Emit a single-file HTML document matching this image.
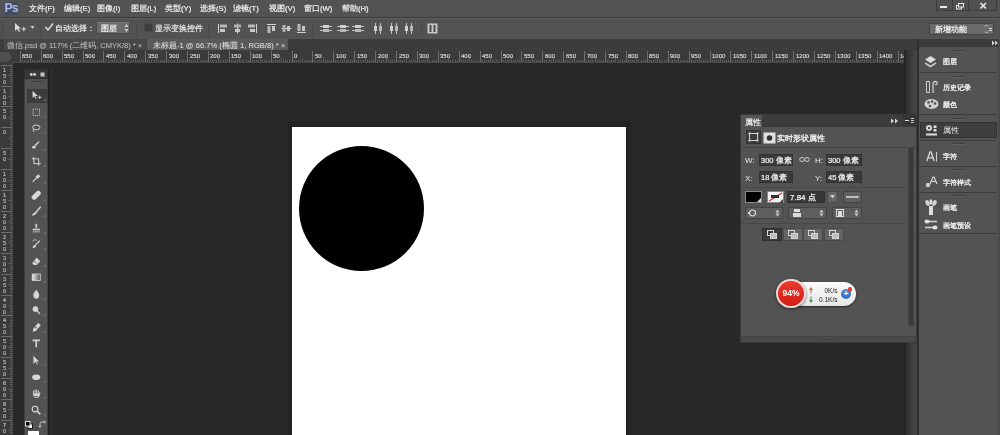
<!DOCTYPE html><html><head><meta charset="utf-8"><style>
*{margin:0;padding:0;box-sizing:border-box}
html,body{width:1000px;height:435px;overflow:hidden;background:#282828;font-family:"Liberation Sans",sans-serif;color:#ddd}
div,span,svg{position:absolute}
.t{will-change:transform;white-space:nowrap;color:#e0e0e0;font-size:9px;line-height:11px}
.ic{stroke:#d8d8d8;fill:none;stroke-width:1}
.rl{will-change:transform;font-size:6px;line-height:6px;color:#dcdcdc;white-space:nowrap;-webkit-text-stroke:0.15px #dcdcdc}
</style></head><body>
<div style="left:0px;top:0px;width:1000px;height:17px;background:#535353;"></div>
<div style="left:4px;top:2px;width:13px;height:13px;background:#424a5e;"></div>
<div style="left:4.5px;top:1.5px;font-size:12px;line-height:13px;font-weight:bold;color:#a8bce6;letter-spacing:-0.8px">Ps</div>
<div class="t" style="left:29px;top:3px;font-size:7.7px;color:#f0f0f0;-webkit-text-stroke:0.2px #f0f0f0">文件(F)</div>
<div class="t" style="left:64px;top:3px;font-size:7.7px;color:#f0f0f0;-webkit-text-stroke:0.2px #f0f0f0">编辑(E)</div>
<div class="t" style="left:97px;top:3px;font-size:7.7px;color:#f0f0f0;-webkit-text-stroke:0.2px #f0f0f0">图像(I)</div>
<div class="t" style="left:131px;top:3px;font-size:7.7px;color:#f0f0f0;-webkit-text-stroke:0.2px #f0f0f0">图层(L)</div>
<div class="t" style="left:165px;top:3px;font-size:7.7px;color:#f0f0f0;-webkit-text-stroke:0.2px #f0f0f0">类型(Y)</div>
<div class="t" style="left:200px;top:3px;font-size:7.7px;color:#f0f0f0;-webkit-text-stroke:0.2px #f0f0f0">选择(S)</div>
<div class="t" style="left:233px;top:3px;font-size:7.7px;color:#f0f0f0;-webkit-text-stroke:0.2px #f0f0f0">滤镜(T)</div>
<div class="t" style="left:269px;top:3px;font-size:7.7px;color:#f0f0f0;-webkit-text-stroke:0.2px #f0f0f0">视图(V)</div>
<div class="t" style="left:304px;top:3px;font-size:7.7px;color:#f0f0f0;-webkit-text-stroke:0.2px #f0f0f0">窗口(W)</div>
<div class="t" style="left:342px;top:3px;font-size:7.7px;color:#f0f0f0;-webkit-text-stroke:0.2px #f0f0f0">帮助(H)</div>
<div style="left:936px;top:0px;width:61px;height:11px;background:#505050;border:1px solid #3c3c3c;border-top:none"></div>
<div style="left:952px;top:0px;width:1px;height:11px;background:#3c3c3c;"></div>
<div style="left:968px;top:0px;width:1px;height:11px;background:#3c3c3c;"></div>
<div style="left:940px;top:6px;width:7px;height:2px;background:#e8e8e8;"></div>
<svg style="left:955px;top:2px;" width="10" height="8" viewBox="0 0 10 8"><rect x="1.5" y="3.5" width="5" height="3.5" stroke="#e8e8e8" fill="none"/><rect x="3.5" y="1.5" width="5" height="3.5" stroke="#e8e8e8" fill="#505050"/></svg>
<svg style="left:979px;top:2px;" width="9" height="8" viewBox="0 0 9 8"><path d="M1.5 1L7 6.5M7 1L1.5 6.5" stroke="#f0f0f0" stroke-width="1.5"/></svg>
<div style="left:0px;top:17px;width:1000px;height:1px;background:#3c3c3c;"></div>
<div style="left:0px;top:18px;width:1000px;height:21px;background:#535353;"></div>
<div style="left:0px;top:18px;width:1000px;height:1px;background:#5c5c5c;"></div>
<div style="left:0px;top:21px;width:1000px;height:1px;background:#4f4f4f;"></div>
<div style="left:1px;top:21px;width:1px;height:15px;background:#474747;"></div>
<div style="left:3px;top:21px;width:1px;height:15px;background:#474747;"></div>
<svg style="left:13px;top:22px;" width="14" height="11" viewBox="0 0 14 11"><path d="M2 1L2 9L4 7L6 10L7 9.5L5.5 6.5L8 6.5Z" fill="#dcdcdc"/><path d="M8.5 7H13M10.8 4.8V9.2" stroke="#dcdcdc"/></svg>
<svg style="left:30px;top:25px;" width="5" height="5" viewBox="0 0 5 5"><path d="M0.5 1L4.5 1L2.5 4Z" fill="#cfcfcf"/></svg>
<div style="left:40px;top:20px;width:1px;height:17px;background:#4a4a4a;"></div>
<svg style="left:44px;top:22px;" width="10" height="10" viewBox="0 0 10 10"><path d="M1.5 5L4 8L9 1.5" stroke="#e0e0e0" stroke-width="1.4" fill="none"/></svg>
<div class="t" style="left:55px;top:23px;font-size:8px;color:#f0f0f0;-webkit-text-stroke:0.15px #f0f0f0">自动选择：</div>
<div style="left:96px;top:22px;width:34px;height:12px;background:#6b6b6b;border:1px solid #4a4a4a;border-top-color:#777"></div>
<div class="t" style="left:101px;top:23px;font-size:8px;color:#f6f6f6;-webkit-text-stroke:0.2px #f6f6f6">图层</div>
<svg style="left:124px;top:23px;" width="5" height="10" viewBox="0 0 5 10"><path d="M0.5 4L2.5 1L4.5 4Z M0.5 6L2.5 9L4.5 6Z" fill="#d0d0d0"/></svg>
<div style="left:136px;top:20px;width:1px;height:17px;background:#4a4a4a;"></div>
<div style="left:144px;top:23px;width:9px;height:9px;background:#3e3e3e;border:1px solid #4a4a4a"></div>
<div class="t" style="left:155px;top:23px;font-size:7.5px;color:#f0f0f0;-webkit-text-stroke:0.15px #f0f0f0">显示变换控件</div>
<div style="left:208px;top:20px;width:1px;height:17px;background:#4a4a4a;"></div>
<svg style="left:217px;top:23px;" width="11" height="11" viewBox="0 0 11 11"><path d="M1.5 1V10" stroke="#d0d0d0"/><rect x="3" y="1.5" width="7" height="3" fill="#b8b8b8"/><rect x="3" y="6" width="5" height="3" fill="#c8c8c8"/></svg>
<svg style="left:232px;top:23px;" width="11" height="11" viewBox="0 0 11 11"><path d="M5.5 0.5V10.5" stroke="#d0d0d0"/><rect x="2" y="1.5" width="7" height="3" fill="#b0b0b0"/><rect x="3" y="6" width="5" height="3" fill="#c8c8c8"/></svg>
<svg style="left:247px;top:23px;" width="11" height="11" viewBox="0 0 11 11"><path d="M9.5 1V10" stroke="#d0d0d0"/><rect x="1" y="1.5" width="7" height="3" fill="#b8b8b8"/><rect x="3" y="6" width="5" height="3" fill="#c8c8c8"/></svg>
<svg style="left:266px;top:23px;" width="11" height="11" viewBox="0 0 11 11"><path d="M1 1.5H10" stroke="#d0d0d0"/><rect x="1.5" y="3" width="3" height="7" fill="#b8b8b8"/><rect x="6" y="3" width="3" height="5" fill="#c8c8c8"/></svg>
<svg style="left:281px;top:23px;" width="11" height="11" viewBox="0 0 11 11"><path d="M0.5 5.5H10.5" stroke="#d0d0d0"/><rect x="1.5" y="2" width="3" height="7" fill="#b0b0b0"/><rect x="6" y="3" width="3" height="5" fill="#c8c8c8"/></svg>
<svg style="left:296px;top:23px;" width="11" height="11" viewBox="0 0 11 11"><path d="M1 9.5H10" stroke="#d0d0d0"/><rect x="1.5" y="1" width="3" height="7" fill="#b8b8b8"/><rect x="6" y="3" width="3" height="5" fill="#c8c8c8"/></svg>
<div style="left:312px;top:20px;width:1px;height:17px;background:#4a4a4a;"></div>
<svg style="left:320px;top:23px;" width="12" height="11" viewBox="0 0 12 11"><path d="M0 3.5H12M0 7.5H12" stroke="#c0c0c0"/><rect x="3" y="2" width="6" height="3" fill="#d0d0d0"/><rect x="3" y="6" width="6" height="3" fill="#b8b8b8"/></svg>
<svg style="left:337px;top:23px;" width="12" height="11" viewBox="0 0 12 11"><path d="M0 3.5H12M0 7.5H12" stroke="#c0c0c0"/><rect x="3" y="2" width="6" height="3" fill="#d0d0d0"/><rect x="3" y="6" width="6" height="3" fill="#b8b8b8"/></svg>
<svg style="left:352px;top:23px;" width="12" height="11" viewBox="0 0 12 11"><path d="M0 3.5H12M0 7.5H12" stroke="#c0c0c0"/><rect x="3" y="2" width="6" height="3" fill="#d0d0d0"/><rect x="3" y="6" width="6" height="3" fill="#b8b8b8"/></svg>
<svg style="left:372px;top:23px;" width="12" height="11" viewBox="0 0 12 11"><path d="M3.5 0V11M8.5 0V11" stroke="#c0c0c0"/><rect x="2" y="3" width="3" height="5" fill="#d0d0d0"/><rect x="7" y="3" width="3" height="5" fill="#b8b8b8"/></svg>
<svg style="left:388px;top:23px;" width="12" height="11" viewBox="0 0 12 11"><path d="M3.5 0V11M8.5 0V11" stroke="#c0c0c0"/><rect x="2" y="3" width="3" height="5" fill="#d0d0d0"/><rect x="7" y="3" width="3" height="5" fill="#b8b8b8"/></svg>
<svg style="left:403px;top:23px;" width="12" height="11" viewBox="0 0 12 11"><path d="M3.5 0V11M8.5 0V11" stroke="#c0c0c0"/><rect x="2" y="3" width="3" height="5" fill="#d0d0d0"/><rect x="7" y="3" width="3" height="5" fill="#b8b8b8"/></svg>
<div style="left:421px;top:20px;width:1px;height:17px;background:#4a4a4a;"></div>
<svg style="left:427px;top:23px;" width="11" height="11" viewBox="0 0 11 11"><rect x="0.5" y="0.5" width="10" height="10" fill="#c8c8c8"/><rect x="2.5" y="2" width="2" height="7" fill="#4a4a4a"/><rect x="6.5" y="2" width="2" height="7" fill="#4a4a4a"/></svg>
<div style="left:929px;top:23px;width:65px;height:12px;background:#6a6a6a;border:1px solid #454545"></div>
<div class="t" style="left:935px;top:24px;font-size:8px;color:#f4f4f4;-webkit-text-stroke:0.2px #f4f4f4">新增功能</div>
<svg style="left:984px;top:24px;" width="9" height="10" viewBox="0 0 9 10"><path d="M1 2.5L2.5 1L4 2.5M1 7.5L2.5 9L4 7.5" stroke="#ccc" fill="none"/><path d="M5 4.5H8M5 6.5H8" stroke="#ddd"/></svg>
<div style="left:0px;top:39px;width:917px;height:11px;background:#3c3c3c;"></div>
<div style="left:4px;top:39px;width:143px;height:11px;background:#474747;"></div>
<div class="t" style="left:7px;top:40px;font-size:7.5px;color:#c4c4c4">微信.psd @ 117% (二维码, CMYK/8) * ×</div>
<div style="left:147px;top:39px;width:141px;height:11px;background:#5a5a5a;"></div>
<div class="t" style="left:153px;top:40px;font-size:7.6px;color:#e8e8e8">未标题-1 @ 66.7% (椭圆 1, RGB/8) * ×</div>
<div style="left:0px;top:50px;width:906px;height:13px;background:#3b3b3b;"></div>
<div style="left:0px;top:63px;width:13px;height:372px;background:#3b3b3b;"></div>
<div style="left:13px;top:62px;width:893px;height:1px;background:#4a4a4a;"></div>
<div style="left:12px;top:63px;width:1px;height:372px;background:#4a4a4a;"></div>
<div style="left:19.80px;top:51px;width:1px;height:11px;background:#6e6e6e"></div>
<div class="rl" style="left:22.30px;top:53px">650</div>
<div style="left:21.89px;top:60px;width:1px;height:2px;background:#5a5a5a"></div>
<div style="left:23.98px;top:60px;width:1px;height:2px;background:#5a5a5a"></div>
<div style="left:26.07px;top:60px;width:1px;height:2px;background:#5a5a5a"></div>
<div style="left:28.16px;top:60px;width:1px;height:2px;background:#5a5a5a"></div>
<div style="left:30.25px;top:58px;width:1px;height:4px;background:#5a5a5a"></div>
<div style="left:32.34px;top:60px;width:1px;height:2px;background:#5a5a5a"></div>
<div style="left:34.43px;top:60px;width:1px;height:2px;background:#5a5a5a"></div>
<div style="left:36.52px;top:60px;width:1px;height:2px;background:#5a5a5a"></div>
<div style="left:38.61px;top:60px;width:1px;height:2px;background:#5a5a5a"></div>
<div style="left:40.70px;top:51px;width:1px;height:11px;background:#6e6e6e"></div>
<div class="rl" style="left:43.20px;top:53px">600</div>
<div style="left:42.79px;top:60px;width:1px;height:2px;background:#5a5a5a"></div>
<div style="left:44.88px;top:60px;width:1px;height:2px;background:#5a5a5a"></div>
<div style="left:46.97px;top:60px;width:1px;height:2px;background:#5a5a5a"></div>
<div style="left:49.06px;top:60px;width:1px;height:2px;background:#5a5a5a"></div>
<div style="left:51.15px;top:58px;width:1px;height:4px;background:#5a5a5a"></div>
<div style="left:53.24px;top:60px;width:1px;height:2px;background:#5a5a5a"></div>
<div style="left:55.33px;top:60px;width:1px;height:2px;background:#5a5a5a"></div>
<div style="left:57.42px;top:60px;width:1px;height:2px;background:#5a5a5a"></div>
<div style="left:59.51px;top:60px;width:1px;height:2px;background:#5a5a5a"></div>
<div style="left:61.60px;top:51px;width:1px;height:11px;background:#6e6e6e"></div>
<div class="rl" style="left:64.10px;top:53px">550</div>
<div style="left:63.69px;top:60px;width:1px;height:2px;background:#5a5a5a"></div>
<div style="left:65.78px;top:60px;width:1px;height:2px;background:#5a5a5a"></div>
<div style="left:67.87px;top:60px;width:1px;height:2px;background:#5a5a5a"></div>
<div style="left:69.96px;top:60px;width:1px;height:2px;background:#5a5a5a"></div>
<div style="left:72.05px;top:58px;width:1px;height:4px;background:#5a5a5a"></div>
<div style="left:74.14px;top:60px;width:1px;height:2px;background:#5a5a5a"></div>
<div style="left:76.23px;top:60px;width:1px;height:2px;background:#5a5a5a"></div>
<div style="left:78.32px;top:60px;width:1px;height:2px;background:#5a5a5a"></div>
<div style="left:80.41px;top:60px;width:1px;height:2px;background:#5a5a5a"></div>
<div style="left:82.50px;top:51px;width:1px;height:11px;background:#6e6e6e"></div>
<div class="rl" style="left:85.00px;top:53px">500</div>
<div style="left:84.59px;top:60px;width:1px;height:2px;background:#5a5a5a"></div>
<div style="left:86.68px;top:60px;width:1px;height:2px;background:#5a5a5a"></div>
<div style="left:88.77px;top:60px;width:1px;height:2px;background:#5a5a5a"></div>
<div style="left:90.86px;top:60px;width:1px;height:2px;background:#5a5a5a"></div>
<div style="left:92.95px;top:58px;width:1px;height:4px;background:#5a5a5a"></div>
<div style="left:95.04px;top:60px;width:1px;height:2px;background:#5a5a5a"></div>
<div style="left:97.13px;top:60px;width:1px;height:2px;background:#5a5a5a"></div>
<div style="left:99.22px;top:60px;width:1px;height:2px;background:#5a5a5a"></div>
<div style="left:101.31px;top:60px;width:1px;height:2px;background:#5a5a5a"></div>
<div style="left:103.40px;top:51px;width:1px;height:11px;background:#6e6e6e"></div>
<div class="rl" style="left:105.90px;top:53px">450</div>
<div style="left:105.49px;top:60px;width:1px;height:2px;background:#5a5a5a"></div>
<div style="left:107.58px;top:60px;width:1px;height:2px;background:#5a5a5a"></div>
<div style="left:109.67px;top:60px;width:1px;height:2px;background:#5a5a5a"></div>
<div style="left:111.76px;top:60px;width:1px;height:2px;background:#5a5a5a"></div>
<div style="left:113.85px;top:58px;width:1px;height:4px;background:#5a5a5a"></div>
<div style="left:115.94px;top:60px;width:1px;height:2px;background:#5a5a5a"></div>
<div style="left:118.03px;top:60px;width:1px;height:2px;background:#5a5a5a"></div>
<div style="left:120.12px;top:60px;width:1px;height:2px;background:#5a5a5a"></div>
<div style="left:122.21px;top:60px;width:1px;height:2px;background:#5a5a5a"></div>
<div style="left:124.30px;top:51px;width:1px;height:11px;background:#6e6e6e"></div>
<div class="rl" style="left:126.80px;top:53px">400</div>
<div style="left:126.39px;top:60px;width:1px;height:2px;background:#5a5a5a"></div>
<div style="left:128.48px;top:60px;width:1px;height:2px;background:#5a5a5a"></div>
<div style="left:130.57px;top:60px;width:1px;height:2px;background:#5a5a5a"></div>
<div style="left:132.66px;top:60px;width:1px;height:2px;background:#5a5a5a"></div>
<div style="left:134.75px;top:58px;width:1px;height:4px;background:#5a5a5a"></div>
<div style="left:136.84px;top:60px;width:1px;height:2px;background:#5a5a5a"></div>
<div style="left:138.93px;top:60px;width:1px;height:2px;background:#5a5a5a"></div>
<div style="left:141.02px;top:60px;width:1px;height:2px;background:#5a5a5a"></div>
<div style="left:143.11px;top:60px;width:1px;height:2px;background:#5a5a5a"></div>
<div style="left:145.20px;top:51px;width:1px;height:11px;background:#6e6e6e"></div>
<div class="rl" style="left:147.70px;top:53px">350</div>
<div style="left:147.29px;top:60px;width:1px;height:2px;background:#5a5a5a"></div>
<div style="left:149.38px;top:60px;width:1px;height:2px;background:#5a5a5a"></div>
<div style="left:151.47px;top:60px;width:1px;height:2px;background:#5a5a5a"></div>
<div style="left:153.56px;top:60px;width:1px;height:2px;background:#5a5a5a"></div>
<div style="left:155.65px;top:58px;width:1px;height:4px;background:#5a5a5a"></div>
<div style="left:157.74px;top:60px;width:1px;height:2px;background:#5a5a5a"></div>
<div style="left:159.83px;top:60px;width:1px;height:2px;background:#5a5a5a"></div>
<div style="left:161.92px;top:60px;width:1px;height:2px;background:#5a5a5a"></div>
<div style="left:164.01px;top:60px;width:1px;height:2px;background:#5a5a5a"></div>
<div style="left:166.10px;top:51px;width:1px;height:11px;background:#6e6e6e"></div>
<div class="rl" style="left:168.60px;top:53px">300</div>
<div style="left:168.19px;top:60px;width:1px;height:2px;background:#5a5a5a"></div>
<div style="left:170.28px;top:60px;width:1px;height:2px;background:#5a5a5a"></div>
<div style="left:172.37px;top:60px;width:1px;height:2px;background:#5a5a5a"></div>
<div style="left:174.46px;top:60px;width:1px;height:2px;background:#5a5a5a"></div>
<div style="left:176.55px;top:58px;width:1px;height:4px;background:#5a5a5a"></div>
<div style="left:178.64px;top:60px;width:1px;height:2px;background:#5a5a5a"></div>
<div style="left:180.73px;top:60px;width:1px;height:2px;background:#5a5a5a"></div>
<div style="left:182.82px;top:60px;width:1px;height:2px;background:#5a5a5a"></div>
<div style="left:184.91px;top:60px;width:1px;height:2px;background:#5a5a5a"></div>
<div style="left:187.00px;top:51px;width:1px;height:11px;background:#6e6e6e"></div>
<div class="rl" style="left:189.50px;top:53px">250</div>
<div style="left:189.09px;top:60px;width:1px;height:2px;background:#5a5a5a"></div>
<div style="left:191.18px;top:60px;width:1px;height:2px;background:#5a5a5a"></div>
<div style="left:193.27px;top:60px;width:1px;height:2px;background:#5a5a5a"></div>
<div style="left:195.36px;top:60px;width:1px;height:2px;background:#5a5a5a"></div>
<div style="left:197.45px;top:58px;width:1px;height:4px;background:#5a5a5a"></div>
<div style="left:199.54px;top:60px;width:1px;height:2px;background:#5a5a5a"></div>
<div style="left:201.63px;top:60px;width:1px;height:2px;background:#5a5a5a"></div>
<div style="left:203.72px;top:60px;width:1px;height:2px;background:#5a5a5a"></div>
<div style="left:205.81px;top:60px;width:1px;height:2px;background:#5a5a5a"></div>
<div style="left:207.90px;top:51px;width:1px;height:11px;background:#6e6e6e"></div>
<div class="rl" style="left:210.40px;top:53px">200</div>
<div style="left:209.99px;top:60px;width:1px;height:2px;background:#5a5a5a"></div>
<div style="left:212.08px;top:60px;width:1px;height:2px;background:#5a5a5a"></div>
<div style="left:214.17px;top:60px;width:1px;height:2px;background:#5a5a5a"></div>
<div style="left:216.26px;top:60px;width:1px;height:2px;background:#5a5a5a"></div>
<div style="left:218.35px;top:58px;width:1px;height:4px;background:#5a5a5a"></div>
<div style="left:220.44px;top:60px;width:1px;height:2px;background:#5a5a5a"></div>
<div style="left:222.53px;top:60px;width:1px;height:2px;background:#5a5a5a"></div>
<div style="left:224.62px;top:60px;width:1px;height:2px;background:#5a5a5a"></div>
<div style="left:226.71px;top:60px;width:1px;height:2px;background:#5a5a5a"></div>
<div style="left:228.80px;top:51px;width:1px;height:11px;background:#6e6e6e"></div>
<div class="rl" style="left:231.30px;top:53px">150</div>
<div style="left:230.89px;top:60px;width:1px;height:2px;background:#5a5a5a"></div>
<div style="left:232.98px;top:60px;width:1px;height:2px;background:#5a5a5a"></div>
<div style="left:235.07px;top:60px;width:1px;height:2px;background:#5a5a5a"></div>
<div style="left:237.16px;top:60px;width:1px;height:2px;background:#5a5a5a"></div>
<div style="left:239.25px;top:58px;width:1px;height:4px;background:#5a5a5a"></div>
<div style="left:241.34px;top:60px;width:1px;height:2px;background:#5a5a5a"></div>
<div style="left:243.43px;top:60px;width:1px;height:2px;background:#5a5a5a"></div>
<div style="left:245.52px;top:60px;width:1px;height:2px;background:#5a5a5a"></div>
<div style="left:247.61px;top:60px;width:1px;height:2px;background:#5a5a5a"></div>
<div style="left:249.70px;top:51px;width:1px;height:11px;background:#6e6e6e"></div>
<div class="rl" style="left:252.20px;top:53px">100</div>
<div style="left:251.79px;top:60px;width:1px;height:2px;background:#5a5a5a"></div>
<div style="left:253.88px;top:60px;width:1px;height:2px;background:#5a5a5a"></div>
<div style="left:255.97px;top:60px;width:1px;height:2px;background:#5a5a5a"></div>
<div style="left:258.06px;top:60px;width:1px;height:2px;background:#5a5a5a"></div>
<div style="left:260.15px;top:58px;width:1px;height:4px;background:#5a5a5a"></div>
<div style="left:262.24px;top:60px;width:1px;height:2px;background:#5a5a5a"></div>
<div style="left:264.33px;top:60px;width:1px;height:2px;background:#5a5a5a"></div>
<div style="left:266.42px;top:60px;width:1px;height:2px;background:#5a5a5a"></div>
<div style="left:268.51px;top:60px;width:1px;height:2px;background:#5a5a5a"></div>
<div style="left:270.60px;top:51px;width:1px;height:11px;background:#6e6e6e"></div>
<div class="rl" style="left:273.10px;top:53px">50</div>
<div style="left:272.69px;top:60px;width:1px;height:2px;background:#5a5a5a"></div>
<div style="left:274.78px;top:60px;width:1px;height:2px;background:#5a5a5a"></div>
<div style="left:276.87px;top:60px;width:1px;height:2px;background:#5a5a5a"></div>
<div style="left:278.96px;top:60px;width:1px;height:2px;background:#5a5a5a"></div>
<div style="left:281.05px;top:58px;width:1px;height:4px;background:#5a5a5a"></div>
<div style="left:283.14px;top:60px;width:1px;height:2px;background:#5a5a5a"></div>
<div style="left:285.23px;top:60px;width:1px;height:2px;background:#5a5a5a"></div>
<div style="left:287.32px;top:60px;width:1px;height:2px;background:#5a5a5a"></div>
<div style="left:289.41px;top:60px;width:1px;height:2px;background:#5a5a5a"></div>
<div style="left:291.50px;top:51px;width:1px;height:11px;background:#6e6e6e"></div>
<div class="rl" style="left:294.00px;top:53px">0</div>
<div style="left:293.59px;top:60px;width:1px;height:2px;background:#5a5a5a"></div>
<div style="left:295.68px;top:60px;width:1px;height:2px;background:#5a5a5a"></div>
<div style="left:297.77px;top:60px;width:1px;height:2px;background:#5a5a5a"></div>
<div style="left:299.86px;top:60px;width:1px;height:2px;background:#5a5a5a"></div>
<div style="left:301.95px;top:58px;width:1px;height:4px;background:#5a5a5a"></div>
<div style="left:304.04px;top:60px;width:1px;height:2px;background:#5a5a5a"></div>
<div style="left:306.13px;top:60px;width:1px;height:2px;background:#5a5a5a"></div>
<div style="left:308.22px;top:60px;width:1px;height:2px;background:#5a5a5a"></div>
<div style="left:310.31px;top:60px;width:1px;height:2px;background:#5a5a5a"></div>
<div style="left:312.40px;top:51px;width:1px;height:11px;background:#6e6e6e"></div>
<div class="rl" style="left:314.90px;top:53px">50</div>
<div style="left:314.49px;top:60px;width:1px;height:2px;background:#5a5a5a"></div>
<div style="left:316.58px;top:60px;width:1px;height:2px;background:#5a5a5a"></div>
<div style="left:318.67px;top:60px;width:1px;height:2px;background:#5a5a5a"></div>
<div style="left:320.76px;top:60px;width:1px;height:2px;background:#5a5a5a"></div>
<div style="left:322.85px;top:58px;width:1px;height:4px;background:#5a5a5a"></div>
<div style="left:324.94px;top:60px;width:1px;height:2px;background:#5a5a5a"></div>
<div style="left:327.03px;top:60px;width:1px;height:2px;background:#5a5a5a"></div>
<div style="left:329.12px;top:60px;width:1px;height:2px;background:#5a5a5a"></div>
<div style="left:331.21px;top:60px;width:1px;height:2px;background:#5a5a5a"></div>
<div style="left:333.30px;top:51px;width:1px;height:11px;background:#6e6e6e"></div>
<div class="rl" style="left:335.80px;top:53px">100</div>
<div style="left:335.39px;top:60px;width:1px;height:2px;background:#5a5a5a"></div>
<div style="left:337.48px;top:60px;width:1px;height:2px;background:#5a5a5a"></div>
<div style="left:339.57px;top:60px;width:1px;height:2px;background:#5a5a5a"></div>
<div style="left:341.66px;top:60px;width:1px;height:2px;background:#5a5a5a"></div>
<div style="left:343.75px;top:58px;width:1px;height:4px;background:#5a5a5a"></div>
<div style="left:345.84px;top:60px;width:1px;height:2px;background:#5a5a5a"></div>
<div style="left:347.93px;top:60px;width:1px;height:2px;background:#5a5a5a"></div>
<div style="left:350.02px;top:60px;width:1px;height:2px;background:#5a5a5a"></div>
<div style="left:352.11px;top:60px;width:1px;height:2px;background:#5a5a5a"></div>
<div style="left:354.20px;top:51px;width:1px;height:11px;background:#6e6e6e"></div>
<div class="rl" style="left:356.70px;top:53px">150</div>
<div style="left:356.29px;top:60px;width:1px;height:2px;background:#5a5a5a"></div>
<div style="left:358.38px;top:60px;width:1px;height:2px;background:#5a5a5a"></div>
<div style="left:360.47px;top:60px;width:1px;height:2px;background:#5a5a5a"></div>
<div style="left:362.56px;top:60px;width:1px;height:2px;background:#5a5a5a"></div>
<div style="left:364.65px;top:58px;width:1px;height:4px;background:#5a5a5a"></div>
<div style="left:366.74px;top:60px;width:1px;height:2px;background:#5a5a5a"></div>
<div style="left:368.83px;top:60px;width:1px;height:2px;background:#5a5a5a"></div>
<div style="left:370.92px;top:60px;width:1px;height:2px;background:#5a5a5a"></div>
<div style="left:373.01px;top:60px;width:1px;height:2px;background:#5a5a5a"></div>
<div style="left:375.10px;top:51px;width:1px;height:11px;background:#6e6e6e"></div>
<div class="rl" style="left:377.60px;top:53px">200</div>
<div style="left:377.19px;top:60px;width:1px;height:2px;background:#5a5a5a"></div>
<div style="left:379.28px;top:60px;width:1px;height:2px;background:#5a5a5a"></div>
<div style="left:381.37px;top:60px;width:1px;height:2px;background:#5a5a5a"></div>
<div style="left:383.46px;top:60px;width:1px;height:2px;background:#5a5a5a"></div>
<div style="left:385.55px;top:58px;width:1px;height:4px;background:#5a5a5a"></div>
<div style="left:387.64px;top:60px;width:1px;height:2px;background:#5a5a5a"></div>
<div style="left:389.73px;top:60px;width:1px;height:2px;background:#5a5a5a"></div>
<div style="left:391.82px;top:60px;width:1px;height:2px;background:#5a5a5a"></div>
<div style="left:393.91px;top:60px;width:1px;height:2px;background:#5a5a5a"></div>
<div style="left:396.00px;top:51px;width:1px;height:11px;background:#6e6e6e"></div>
<div class="rl" style="left:398.50px;top:53px">250</div>
<div style="left:398.09px;top:60px;width:1px;height:2px;background:#5a5a5a"></div>
<div style="left:400.18px;top:60px;width:1px;height:2px;background:#5a5a5a"></div>
<div style="left:402.27px;top:60px;width:1px;height:2px;background:#5a5a5a"></div>
<div style="left:404.36px;top:60px;width:1px;height:2px;background:#5a5a5a"></div>
<div style="left:406.45px;top:58px;width:1px;height:4px;background:#5a5a5a"></div>
<div style="left:408.54px;top:60px;width:1px;height:2px;background:#5a5a5a"></div>
<div style="left:410.63px;top:60px;width:1px;height:2px;background:#5a5a5a"></div>
<div style="left:412.72px;top:60px;width:1px;height:2px;background:#5a5a5a"></div>
<div style="left:414.81px;top:60px;width:1px;height:2px;background:#5a5a5a"></div>
<div style="left:416.90px;top:51px;width:1px;height:11px;background:#6e6e6e"></div>
<div class="rl" style="left:419.40px;top:53px">300</div>
<div style="left:418.99px;top:60px;width:1px;height:2px;background:#5a5a5a"></div>
<div style="left:421.08px;top:60px;width:1px;height:2px;background:#5a5a5a"></div>
<div style="left:423.17px;top:60px;width:1px;height:2px;background:#5a5a5a"></div>
<div style="left:425.26px;top:60px;width:1px;height:2px;background:#5a5a5a"></div>
<div style="left:427.35px;top:58px;width:1px;height:4px;background:#5a5a5a"></div>
<div style="left:429.44px;top:60px;width:1px;height:2px;background:#5a5a5a"></div>
<div style="left:431.53px;top:60px;width:1px;height:2px;background:#5a5a5a"></div>
<div style="left:433.62px;top:60px;width:1px;height:2px;background:#5a5a5a"></div>
<div style="left:435.71px;top:60px;width:1px;height:2px;background:#5a5a5a"></div>
<div style="left:437.80px;top:51px;width:1px;height:11px;background:#6e6e6e"></div>
<div class="rl" style="left:440.30px;top:53px">350</div>
<div style="left:439.89px;top:60px;width:1px;height:2px;background:#5a5a5a"></div>
<div style="left:441.98px;top:60px;width:1px;height:2px;background:#5a5a5a"></div>
<div style="left:444.07px;top:60px;width:1px;height:2px;background:#5a5a5a"></div>
<div style="left:446.16px;top:60px;width:1px;height:2px;background:#5a5a5a"></div>
<div style="left:448.25px;top:58px;width:1px;height:4px;background:#5a5a5a"></div>
<div style="left:450.34px;top:60px;width:1px;height:2px;background:#5a5a5a"></div>
<div style="left:452.43px;top:60px;width:1px;height:2px;background:#5a5a5a"></div>
<div style="left:454.52px;top:60px;width:1px;height:2px;background:#5a5a5a"></div>
<div style="left:456.61px;top:60px;width:1px;height:2px;background:#5a5a5a"></div>
<div style="left:458.70px;top:51px;width:1px;height:11px;background:#6e6e6e"></div>
<div class="rl" style="left:461.20px;top:53px">400</div>
<div style="left:460.79px;top:60px;width:1px;height:2px;background:#5a5a5a"></div>
<div style="left:462.88px;top:60px;width:1px;height:2px;background:#5a5a5a"></div>
<div style="left:464.97px;top:60px;width:1px;height:2px;background:#5a5a5a"></div>
<div style="left:467.06px;top:60px;width:1px;height:2px;background:#5a5a5a"></div>
<div style="left:469.15px;top:58px;width:1px;height:4px;background:#5a5a5a"></div>
<div style="left:471.24px;top:60px;width:1px;height:2px;background:#5a5a5a"></div>
<div style="left:473.33px;top:60px;width:1px;height:2px;background:#5a5a5a"></div>
<div style="left:475.42px;top:60px;width:1px;height:2px;background:#5a5a5a"></div>
<div style="left:477.51px;top:60px;width:1px;height:2px;background:#5a5a5a"></div>
<div style="left:479.60px;top:51px;width:1px;height:11px;background:#6e6e6e"></div>
<div class="rl" style="left:482.10px;top:53px">450</div>
<div style="left:481.69px;top:60px;width:1px;height:2px;background:#5a5a5a"></div>
<div style="left:483.78px;top:60px;width:1px;height:2px;background:#5a5a5a"></div>
<div style="left:485.87px;top:60px;width:1px;height:2px;background:#5a5a5a"></div>
<div style="left:487.96px;top:60px;width:1px;height:2px;background:#5a5a5a"></div>
<div style="left:490.05px;top:58px;width:1px;height:4px;background:#5a5a5a"></div>
<div style="left:492.14px;top:60px;width:1px;height:2px;background:#5a5a5a"></div>
<div style="left:494.23px;top:60px;width:1px;height:2px;background:#5a5a5a"></div>
<div style="left:496.32px;top:60px;width:1px;height:2px;background:#5a5a5a"></div>
<div style="left:498.41px;top:60px;width:1px;height:2px;background:#5a5a5a"></div>
<div style="left:500.50px;top:51px;width:1px;height:11px;background:#6e6e6e"></div>
<div class="rl" style="left:503.00px;top:53px">500</div>
<div style="left:502.59px;top:60px;width:1px;height:2px;background:#5a5a5a"></div>
<div style="left:504.68px;top:60px;width:1px;height:2px;background:#5a5a5a"></div>
<div style="left:506.77px;top:60px;width:1px;height:2px;background:#5a5a5a"></div>
<div style="left:508.86px;top:60px;width:1px;height:2px;background:#5a5a5a"></div>
<div style="left:510.95px;top:58px;width:1px;height:4px;background:#5a5a5a"></div>
<div style="left:513.04px;top:60px;width:1px;height:2px;background:#5a5a5a"></div>
<div style="left:515.13px;top:60px;width:1px;height:2px;background:#5a5a5a"></div>
<div style="left:517.22px;top:60px;width:1px;height:2px;background:#5a5a5a"></div>
<div style="left:519.31px;top:60px;width:1px;height:2px;background:#5a5a5a"></div>
<div style="left:521.40px;top:51px;width:1px;height:11px;background:#6e6e6e"></div>
<div class="rl" style="left:523.90px;top:53px">550</div>
<div style="left:523.49px;top:60px;width:1px;height:2px;background:#5a5a5a"></div>
<div style="left:525.58px;top:60px;width:1px;height:2px;background:#5a5a5a"></div>
<div style="left:527.67px;top:60px;width:1px;height:2px;background:#5a5a5a"></div>
<div style="left:529.76px;top:60px;width:1px;height:2px;background:#5a5a5a"></div>
<div style="left:531.85px;top:58px;width:1px;height:4px;background:#5a5a5a"></div>
<div style="left:533.94px;top:60px;width:1px;height:2px;background:#5a5a5a"></div>
<div style="left:536.03px;top:60px;width:1px;height:2px;background:#5a5a5a"></div>
<div style="left:538.12px;top:60px;width:1px;height:2px;background:#5a5a5a"></div>
<div style="left:540.21px;top:60px;width:1px;height:2px;background:#5a5a5a"></div>
<div style="left:542.30px;top:51px;width:1px;height:11px;background:#6e6e6e"></div>
<div class="rl" style="left:544.80px;top:53px">600</div>
<div style="left:544.39px;top:60px;width:1px;height:2px;background:#5a5a5a"></div>
<div style="left:546.48px;top:60px;width:1px;height:2px;background:#5a5a5a"></div>
<div style="left:548.57px;top:60px;width:1px;height:2px;background:#5a5a5a"></div>
<div style="left:550.66px;top:60px;width:1px;height:2px;background:#5a5a5a"></div>
<div style="left:552.75px;top:58px;width:1px;height:4px;background:#5a5a5a"></div>
<div style="left:554.84px;top:60px;width:1px;height:2px;background:#5a5a5a"></div>
<div style="left:556.93px;top:60px;width:1px;height:2px;background:#5a5a5a"></div>
<div style="left:559.02px;top:60px;width:1px;height:2px;background:#5a5a5a"></div>
<div style="left:561.11px;top:60px;width:1px;height:2px;background:#5a5a5a"></div>
<div style="left:563.20px;top:51px;width:1px;height:11px;background:#6e6e6e"></div>
<div class="rl" style="left:565.70px;top:53px">650</div>
<div style="left:565.29px;top:60px;width:1px;height:2px;background:#5a5a5a"></div>
<div style="left:567.38px;top:60px;width:1px;height:2px;background:#5a5a5a"></div>
<div style="left:569.47px;top:60px;width:1px;height:2px;background:#5a5a5a"></div>
<div style="left:571.56px;top:60px;width:1px;height:2px;background:#5a5a5a"></div>
<div style="left:573.65px;top:58px;width:1px;height:4px;background:#5a5a5a"></div>
<div style="left:575.74px;top:60px;width:1px;height:2px;background:#5a5a5a"></div>
<div style="left:577.83px;top:60px;width:1px;height:2px;background:#5a5a5a"></div>
<div style="left:579.92px;top:60px;width:1px;height:2px;background:#5a5a5a"></div>
<div style="left:582.01px;top:60px;width:1px;height:2px;background:#5a5a5a"></div>
<div style="left:584.10px;top:51px;width:1px;height:11px;background:#6e6e6e"></div>
<div class="rl" style="left:586.60px;top:53px">700</div>
<div style="left:586.19px;top:60px;width:1px;height:2px;background:#5a5a5a"></div>
<div style="left:588.28px;top:60px;width:1px;height:2px;background:#5a5a5a"></div>
<div style="left:590.37px;top:60px;width:1px;height:2px;background:#5a5a5a"></div>
<div style="left:592.46px;top:60px;width:1px;height:2px;background:#5a5a5a"></div>
<div style="left:594.55px;top:58px;width:1px;height:4px;background:#5a5a5a"></div>
<div style="left:596.64px;top:60px;width:1px;height:2px;background:#5a5a5a"></div>
<div style="left:598.73px;top:60px;width:1px;height:2px;background:#5a5a5a"></div>
<div style="left:600.82px;top:60px;width:1px;height:2px;background:#5a5a5a"></div>
<div style="left:602.91px;top:60px;width:1px;height:2px;background:#5a5a5a"></div>
<div style="left:605.00px;top:51px;width:1px;height:11px;background:#6e6e6e"></div>
<div class="rl" style="left:607.50px;top:53px">750</div>
<div style="left:607.09px;top:60px;width:1px;height:2px;background:#5a5a5a"></div>
<div style="left:609.18px;top:60px;width:1px;height:2px;background:#5a5a5a"></div>
<div style="left:611.27px;top:60px;width:1px;height:2px;background:#5a5a5a"></div>
<div style="left:613.36px;top:60px;width:1px;height:2px;background:#5a5a5a"></div>
<div style="left:615.45px;top:58px;width:1px;height:4px;background:#5a5a5a"></div>
<div style="left:617.54px;top:60px;width:1px;height:2px;background:#5a5a5a"></div>
<div style="left:619.63px;top:60px;width:1px;height:2px;background:#5a5a5a"></div>
<div style="left:621.72px;top:60px;width:1px;height:2px;background:#5a5a5a"></div>
<div style="left:623.81px;top:60px;width:1px;height:2px;background:#5a5a5a"></div>
<div style="left:625.90px;top:51px;width:1px;height:11px;background:#6e6e6e"></div>
<div class="rl" style="left:628.40px;top:53px">800</div>
<div style="left:627.99px;top:60px;width:1px;height:2px;background:#5a5a5a"></div>
<div style="left:630.08px;top:60px;width:1px;height:2px;background:#5a5a5a"></div>
<div style="left:632.17px;top:60px;width:1px;height:2px;background:#5a5a5a"></div>
<div style="left:634.26px;top:60px;width:1px;height:2px;background:#5a5a5a"></div>
<div style="left:636.35px;top:58px;width:1px;height:4px;background:#5a5a5a"></div>
<div style="left:638.44px;top:60px;width:1px;height:2px;background:#5a5a5a"></div>
<div style="left:640.53px;top:60px;width:1px;height:2px;background:#5a5a5a"></div>
<div style="left:642.62px;top:60px;width:1px;height:2px;background:#5a5a5a"></div>
<div style="left:644.71px;top:60px;width:1px;height:2px;background:#5a5a5a"></div>
<div style="left:646.80px;top:51px;width:1px;height:11px;background:#6e6e6e"></div>
<div class="rl" style="left:649.30px;top:53px">850</div>
<div style="left:648.89px;top:60px;width:1px;height:2px;background:#5a5a5a"></div>
<div style="left:650.98px;top:60px;width:1px;height:2px;background:#5a5a5a"></div>
<div style="left:653.07px;top:60px;width:1px;height:2px;background:#5a5a5a"></div>
<div style="left:655.16px;top:60px;width:1px;height:2px;background:#5a5a5a"></div>
<div style="left:657.25px;top:58px;width:1px;height:4px;background:#5a5a5a"></div>
<div style="left:659.34px;top:60px;width:1px;height:2px;background:#5a5a5a"></div>
<div style="left:661.43px;top:60px;width:1px;height:2px;background:#5a5a5a"></div>
<div style="left:663.52px;top:60px;width:1px;height:2px;background:#5a5a5a"></div>
<div style="left:665.61px;top:60px;width:1px;height:2px;background:#5a5a5a"></div>
<div style="left:667.70px;top:51px;width:1px;height:11px;background:#6e6e6e"></div>
<div class="rl" style="left:670.20px;top:53px">900</div>
<div style="left:669.79px;top:60px;width:1px;height:2px;background:#5a5a5a"></div>
<div style="left:671.88px;top:60px;width:1px;height:2px;background:#5a5a5a"></div>
<div style="left:673.97px;top:60px;width:1px;height:2px;background:#5a5a5a"></div>
<div style="left:676.06px;top:60px;width:1px;height:2px;background:#5a5a5a"></div>
<div style="left:678.15px;top:58px;width:1px;height:4px;background:#5a5a5a"></div>
<div style="left:680.24px;top:60px;width:1px;height:2px;background:#5a5a5a"></div>
<div style="left:682.33px;top:60px;width:1px;height:2px;background:#5a5a5a"></div>
<div style="left:684.42px;top:60px;width:1px;height:2px;background:#5a5a5a"></div>
<div style="left:686.51px;top:60px;width:1px;height:2px;background:#5a5a5a"></div>
<div style="left:688.60px;top:51px;width:1px;height:11px;background:#6e6e6e"></div>
<div class="rl" style="left:691.10px;top:53px">950</div>
<div style="left:690.69px;top:60px;width:1px;height:2px;background:#5a5a5a"></div>
<div style="left:692.78px;top:60px;width:1px;height:2px;background:#5a5a5a"></div>
<div style="left:694.87px;top:60px;width:1px;height:2px;background:#5a5a5a"></div>
<div style="left:696.96px;top:60px;width:1px;height:2px;background:#5a5a5a"></div>
<div style="left:699.05px;top:58px;width:1px;height:4px;background:#5a5a5a"></div>
<div style="left:701.14px;top:60px;width:1px;height:2px;background:#5a5a5a"></div>
<div style="left:703.23px;top:60px;width:1px;height:2px;background:#5a5a5a"></div>
<div style="left:705.32px;top:60px;width:1px;height:2px;background:#5a5a5a"></div>
<div style="left:707.41px;top:60px;width:1px;height:2px;background:#5a5a5a"></div>
<div style="left:709.50px;top:51px;width:1px;height:11px;background:#6e6e6e"></div>
<div class="rl" style="left:712.00px;top:53px">1000</div>
<div style="left:711.59px;top:60px;width:1px;height:2px;background:#5a5a5a"></div>
<div style="left:713.68px;top:60px;width:1px;height:2px;background:#5a5a5a"></div>
<div style="left:715.77px;top:60px;width:1px;height:2px;background:#5a5a5a"></div>
<div style="left:717.86px;top:60px;width:1px;height:2px;background:#5a5a5a"></div>
<div style="left:719.95px;top:58px;width:1px;height:4px;background:#5a5a5a"></div>
<div style="left:722.04px;top:60px;width:1px;height:2px;background:#5a5a5a"></div>
<div style="left:724.13px;top:60px;width:1px;height:2px;background:#5a5a5a"></div>
<div style="left:726.22px;top:60px;width:1px;height:2px;background:#5a5a5a"></div>
<div style="left:728.31px;top:60px;width:1px;height:2px;background:#5a5a5a"></div>
<div style="left:730.40px;top:51px;width:1px;height:11px;background:#6e6e6e"></div>
<div class="rl" style="left:732.90px;top:53px">1050</div>
<div style="left:732.49px;top:60px;width:1px;height:2px;background:#5a5a5a"></div>
<div style="left:734.58px;top:60px;width:1px;height:2px;background:#5a5a5a"></div>
<div style="left:736.67px;top:60px;width:1px;height:2px;background:#5a5a5a"></div>
<div style="left:738.76px;top:60px;width:1px;height:2px;background:#5a5a5a"></div>
<div style="left:740.85px;top:58px;width:1px;height:4px;background:#5a5a5a"></div>
<div style="left:742.94px;top:60px;width:1px;height:2px;background:#5a5a5a"></div>
<div style="left:745.03px;top:60px;width:1px;height:2px;background:#5a5a5a"></div>
<div style="left:747.12px;top:60px;width:1px;height:2px;background:#5a5a5a"></div>
<div style="left:749.21px;top:60px;width:1px;height:2px;background:#5a5a5a"></div>
<div style="left:751.30px;top:51px;width:1px;height:11px;background:#6e6e6e"></div>
<div class="rl" style="left:753.80px;top:53px">1100</div>
<div style="left:753.39px;top:60px;width:1px;height:2px;background:#5a5a5a"></div>
<div style="left:755.48px;top:60px;width:1px;height:2px;background:#5a5a5a"></div>
<div style="left:757.57px;top:60px;width:1px;height:2px;background:#5a5a5a"></div>
<div style="left:759.66px;top:60px;width:1px;height:2px;background:#5a5a5a"></div>
<div style="left:761.75px;top:58px;width:1px;height:4px;background:#5a5a5a"></div>
<div style="left:763.84px;top:60px;width:1px;height:2px;background:#5a5a5a"></div>
<div style="left:765.93px;top:60px;width:1px;height:2px;background:#5a5a5a"></div>
<div style="left:768.02px;top:60px;width:1px;height:2px;background:#5a5a5a"></div>
<div style="left:770.11px;top:60px;width:1px;height:2px;background:#5a5a5a"></div>
<div style="left:772.20px;top:51px;width:1px;height:11px;background:#6e6e6e"></div>
<div class="rl" style="left:774.70px;top:53px">1150</div>
<div style="left:774.29px;top:60px;width:1px;height:2px;background:#5a5a5a"></div>
<div style="left:776.38px;top:60px;width:1px;height:2px;background:#5a5a5a"></div>
<div style="left:778.47px;top:60px;width:1px;height:2px;background:#5a5a5a"></div>
<div style="left:780.56px;top:60px;width:1px;height:2px;background:#5a5a5a"></div>
<div style="left:782.65px;top:58px;width:1px;height:4px;background:#5a5a5a"></div>
<div style="left:784.74px;top:60px;width:1px;height:2px;background:#5a5a5a"></div>
<div style="left:786.83px;top:60px;width:1px;height:2px;background:#5a5a5a"></div>
<div style="left:788.92px;top:60px;width:1px;height:2px;background:#5a5a5a"></div>
<div style="left:791.01px;top:60px;width:1px;height:2px;background:#5a5a5a"></div>
<div style="left:793.10px;top:51px;width:1px;height:11px;background:#6e6e6e"></div>
<div class="rl" style="left:795.60px;top:53px">1200</div>
<div style="left:795.19px;top:60px;width:1px;height:2px;background:#5a5a5a"></div>
<div style="left:797.28px;top:60px;width:1px;height:2px;background:#5a5a5a"></div>
<div style="left:799.37px;top:60px;width:1px;height:2px;background:#5a5a5a"></div>
<div style="left:801.46px;top:60px;width:1px;height:2px;background:#5a5a5a"></div>
<div style="left:803.55px;top:58px;width:1px;height:4px;background:#5a5a5a"></div>
<div style="left:805.64px;top:60px;width:1px;height:2px;background:#5a5a5a"></div>
<div style="left:807.73px;top:60px;width:1px;height:2px;background:#5a5a5a"></div>
<div style="left:809.82px;top:60px;width:1px;height:2px;background:#5a5a5a"></div>
<div style="left:811.91px;top:60px;width:1px;height:2px;background:#5a5a5a"></div>
<div style="left:814.00px;top:51px;width:1px;height:11px;background:#6e6e6e"></div>
<div class="rl" style="left:816.50px;top:53px">1250</div>
<div style="left:816.09px;top:60px;width:1px;height:2px;background:#5a5a5a"></div>
<div style="left:818.18px;top:60px;width:1px;height:2px;background:#5a5a5a"></div>
<div style="left:820.27px;top:60px;width:1px;height:2px;background:#5a5a5a"></div>
<div style="left:822.36px;top:60px;width:1px;height:2px;background:#5a5a5a"></div>
<div style="left:824.45px;top:58px;width:1px;height:4px;background:#5a5a5a"></div>
<div style="left:826.54px;top:60px;width:1px;height:2px;background:#5a5a5a"></div>
<div style="left:828.63px;top:60px;width:1px;height:2px;background:#5a5a5a"></div>
<div style="left:830.72px;top:60px;width:1px;height:2px;background:#5a5a5a"></div>
<div style="left:832.81px;top:60px;width:1px;height:2px;background:#5a5a5a"></div>
<div style="left:834.90px;top:51px;width:1px;height:11px;background:#6e6e6e"></div>
<div class="rl" style="left:837.40px;top:53px">1300</div>
<div style="left:836.99px;top:60px;width:1px;height:2px;background:#5a5a5a"></div>
<div style="left:839.08px;top:60px;width:1px;height:2px;background:#5a5a5a"></div>
<div style="left:841.17px;top:60px;width:1px;height:2px;background:#5a5a5a"></div>
<div style="left:843.26px;top:60px;width:1px;height:2px;background:#5a5a5a"></div>
<div style="left:845.35px;top:58px;width:1px;height:4px;background:#5a5a5a"></div>
<div style="left:847.44px;top:60px;width:1px;height:2px;background:#5a5a5a"></div>
<div style="left:849.53px;top:60px;width:1px;height:2px;background:#5a5a5a"></div>
<div style="left:851.62px;top:60px;width:1px;height:2px;background:#5a5a5a"></div>
<div style="left:853.71px;top:60px;width:1px;height:2px;background:#5a5a5a"></div>
<div style="left:855.80px;top:51px;width:1px;height:11px;background:#6e6e6e"></div>
<div class="rl" style="left:858.30px;top:53px">1350</div>
<div style="left:857.89px;top:60px;width:1px;height:2px;background:#5a5a5a"></div>
<div style="left:859.98px;top:60px;width:1px;height:2px;background:#5a5a5a"></div>
<div style="left:862.07px;top:60px;width:1px;height:2px;background:#5a5a5a"></div>
<div style="left:864.16px;top:60px;width:1px;height:2px;background:#5a5a5a"></div>
<div style="left:866.25px;top:58px;width:1px;height:4px;background:#5a5a5a"></div>
<div style="left:868.34px;top:60px;width:1px;height:2px;background:#5a5a5a"></div>
<div style="left:870.43px;top:60px;width:1px;height:2px;background:#5a5a5a"></div>
<div style="left:872.52px;top:60px;width:1px;height:2px;background:#5a5a5a"></div>
<div style="left:874.61px;top:60px;width:1px;height:2px;background:#5a5a5a"></div>
<div style="left:876.70px;top:51px;width:1px;height:11px;background:#6e6e6e"></div>
<div class="rl" style="left:879.20px;top:53px">1400</div>
<div style="left:878.79px;top:60px;width:1px;height:2px;background:#5a5a5a"></div>
<div style="left:880.88px;top:60px;width:1px;height:2px;background:#5a5a5a"></div>
<div style="left:882.97px;top:60px;width:1px;height:2px;background:#5a5a5a"></div>
<div style="left:885.06px;top:60px;width:1px;height:2px;background:#5a5a5a"></div>
<div style="left:887.15px;top:58px;width:1px;height:4px;background:#5a5a5a"></div>
<div style="left:889.24px;top:60px;width:1px;height:2px;background:#5a5a5a"></div>
<div style="left:891.33px;top:60px;width:1px;height:2px;background:#5a5a5a"></div>
<div style="left:893.42px;top:60px;width:1px;height:2px;background:#5a5a5a"></div>
<div style="left:895.51px;top:60px;width:1px;height:2px;background:#5a5a5a"></div>
<div style="left:897.60px;top:51px;width:1px;height:11px;background:#6e6e6e"></div>
<div class="rl" style="left:900.10px;top:53px">1450</div>
<div style="left:899.69px;top:60px;width:1px;height:2px;background:#5a5a5a"></div>
<div style="left:901.78px;top:60px;width:1px;height:2px;background:#5a5a5a"></div>
<div style="left:903.87px;top:60px;width:1px;height:2px;background:#5a5a5a"></div>
<div style="left:905.96px;top:60px;width:1px;height:2px;background:#5a5a5a"></div>
<div style="left:1px;top:64.60px;width:11px;height:1px;background:#6e6e6e"></div>
<div class="rl" style="left:2.5px;top:66.60px;width:5px;font-size:5.5px;line-height:6px;color:#a8a8a8;white-space:normal;word-break:break-all">150</div>
<div style="left:10px;top:66.69px;width:2px;height:1px;background:#5a5a5a"></div>
<div style="left:10px;top:68.78px;width:2px;height:1px;background:#5a5a5a"></div>
<div style="left:10px;top:70.87px;width:2px;height:1px;background:#5a5a5a"></div>
<div style="left:10px;top:72.96px;width:2px;height:1px;background:#5a5a5a"></div>
<div style="left:8px;top:75.05px;width:4px;height:1px;background:#5a5a5a"></div>
<div style="left:10px;top:77.14px;width:2px;height:1px;background:#5a5a5a"></div>
<div style="left:10px;top:79.23px;width:2px;height:1px;background:#5a5a5a"></div>
<div style="left:10px;top:81.32px;width:2px;height:1px;background:#5a5a5a"></div>
<div style="left:10px;top:83.41px;width:2px;height:1px;background:#5a5a5a"></div>
<div style="left:1px;top:85.50px;width:11px;height:1px;background:#6e6e6e"></div>
<div class="rl" style="left:2.5px;top:87.50px;width:5px;font-size:5.5px;line-height:6px;color:#a8a8a8;white-space:normal;word-break:break-all">100</div>
<div style="left:10px;top:87.59px;width:2px;height:1px;background:#5a5a5a"></div>
<div style="left:10px;top:89.68px;width:2px;height:1px;background:#5a5a5a"></div>
<div style="left:10px;top:91.77px;width:2px;height:1px;background:#5a5a5a"></div>
<div style="left:10px;top:93.86px;width:2px;height:1px;background:#5a5a5a"></div>
<div style="left:8px;top:95.95px;width:4px;height:1px;background:#5a5a5a"></div>
<div style="left:10px;top:98.04px;width:2px;height:1px;background:#5a5a5a"></div>
<div style="left:10px;top:100.13px;width:2px;height:1px;background:#5a5a5a"></div>
<div style="left:10px;top:102.22px;width:2px;height:1px;background:#5a5a5a"></div>
<div style="left:10px;top:104.31px;width:2px;height:1px;background:#5a5a5a"></div>
<div style="left:1px;top:106.40px;width:11px;height:1px;background:#6e6e6e"></div>
<div class="rl" style="left:2.5px;top:108.40px;width:5px;font-size:5.5px;line-height:6px;color:#a8a8a8;white-space:normal;word-break:break-all">50</div>
<div style="left:10px;top:108.49px;width:2px;height:1px;background:#5a5a5a"></div>
<div style="left:10px;top:110.58px;width:2px;height:1px;background:#5a5a5a"></div>
<div style="left:10px;top:112.67px;width:2px;height:1px;background:#5a5a5a"></div>
<div style="left:10px;top:114.76px;width:2px;height:1px;background:#5a5a5a"></div>
<div style="left:8px;top:116.85px;width:4px;height:1px;background:#5a5a5a"></div>
<div style="left:10px;top:118.94px;width:2px;height:1px;background:#5a5a5a"></div>
<div style="left:10px;top:121.03px;width:2px;height:1px;background:#5a5a5a"></div>
<div style="left:10px;top:123.12px;width:2px;height:1px;background:#5a5a5a"></div>
<div style="left:10px;top:125.21px;width:2px;height:1px;background:#5a5a5a"></div>
<div style="left:1px;top:127.30px;width:11px;height:1px;background:#6e6e6e"></div>
<div class="rl" style="left:2.5px;top:129.30px;width:5px;font-size:5.5px;line-height:6px;color:#a8a8a8;white-space:normal;word-break:break-all">0</div>
<div style="left:10px;top:129.39px;width:2px;height:1px;background:#5a5a5a"></div>
<div style="left:10px;top:131.48px;width:2px;height:1px;background:#5a5a5a"></div>
<div style="left:10px;top:133.57px;width:2px;height:1px;background:#5a5a5a"></div>
<div style="left:10px;top:135.66px;width:2px;height:1px;background:#5a5a5a"></div>
<div style="left:8px;top:137.75px;width:4px;height:1px;background:#5a5a5a"></div>
<div style="left:10px;top:139.84px;width:2px;height:1px;background:#5a5a5a"></div>
<div style="left:10px;top:141.93px;width:2px;height:1px;background:#5a5a5a"></div>
<div style="left:10px;top:144.02px;width:2px;height:1px;background:#5a5a5a"></div>
<div style="left:10px;top:146.11px;width:2px;height:1px;background:#5a5a5a"></div>
<div style="left:1px;top:148.20px;width:11px;height:1px;background:#6e6e6e"></div>
<div class="rl" style="left:2.5px;top:150.20px;width:5px;font-size:5.5px;line-height:6px;color:#a8a8a8;white-space:normal;word-break:break-all">50</div>
<div style="left:10px;top:150.29px;width:2px;height:1px;background:#5a5a5a"></div>
<div style="left:10px;top:152.38px;width:2px;height:1px;background:#5a5a5a"></div>
<div style="left:10px;top:154.47px;width:2px;height:1px;background:#5a5a5a"></div>
<div style="left:10px;top:156.56px;width:2px;height:1px;background:#5a5a5a"></div>
<div style="left:8px;top:158.65px;width:4px;height:1px;background:#5a5a5a"></div>
<div style="left:10px;top:160.74px;width:2px;height:1px;background:#5a5a5a"></div>
<div style="left:10px;top:162.83px;width:2px;height:1px;background:#5a5a5a"></div>
<div style="left:10px;top:164.92px;width:2px;height:1px;background:#5a5a5a"></div>
<div style="left:10px;top:167.01px;width:2px;height:1px;background:#5a5a5a"></div>
<div style="left:1px;top:169.10px;width:11px;height:1px;background:#6e6e6e"></div>
<div class="rl" style="left:2.5px;top:171.10px;width:5px;font-size:5.5px;line-height:6px;color:#a8a8a8;white-space:normal;word-break:break-all">100</div>
<div style="left:10px;top:171.19px;width:2px;height:1px;background:#5a5a5a"></div>
<div style="left:10px;top:173.28px;width:2px;height:1px;background:#5a5a5a"></div>
<div style="left:10px;top:175.37px;width:2px;height:1px;background:#5a5a5a"></div>
<div style="left:10px;top:177.46px;width:2px;height:1px;background:#5a5a5a"></div>
<div style="left:8px;top:179.55px;width:4px;height:1px;background:#5a5a5a"></div>
<div style="left:10px;top:181.64px;width:2px;height:1px;background:#5a5a5a"></div>
<div style="left:10px;top:183.73px;width:2px;height:1px;background:#5a5a5a"></div>
<div style="left:10px;top:185.82px;width:2px;height:1px;background:#5a5a5a"></div>
<div style="left:10px;top:187.91px;width:2px;height:1px;background:#5a5a5a"></div>
<div style="left:1px;top:190.00px;width:11px;height:1px;background:#6e6e6e"></div>
<div class="rl" style="left:2.5px;top:192.00px;width:5px;font-size:5.5px;line-height:6px;color:#a8a8a8;white-space:normal;word-break:break-all">150</div>
<div style="left:10px;top:192.09px;width:2px;height:1px;background:#5a5a5a"></div>
<div style="left:10px;top:194.18px;width:2px;height:1px;background:#5a5a5a"></div>
<div style="left:10px;top:196.27px;width:2px;height:1px;background:#5a5a5a"></div>
<div style="left:10px;top:198.36px;width:2px;height:1px;background:#5a5a5a"></div>
<div style="left:8px;top:200.45px;width:4px;height:1px;background:#5a5a5a"></div>
<div style="left:10px;top:202.54px;width:2px;height:1px;background:#5a5a5a"></div>
<div style="left:10px;top:204.63px;width:2px;height:1px;background:#5a5a5a"></div>
<div style="left:10px;top:206.72px;width:2px;height:1px;background:#5a5a5a"></div>
<div style="left:10px;top:208.81px;width:2px;height:1px;background:#5a5a5a"></div>
<div style="left:1px;top:210.90px;width:11px;height:1px;background:#6e6e6e"></div>
<div class="rl" style="left:2.5px;top:212.90px;width:5px;font-size:5.5px;line-height:6px;color:#a8a8a8;white-space:normal;word-break:break-all">200</div>
<div style="left:10px;top:212.99px;width:2px;height:1px;background:#5a5a5a"></div>
<div style="left:10px;top:215.08px;width:2px;height:1px;background:#5a5a5a"></div>
<div style="left:10px;top:217.17px;width:2px;height:1px;background:#5a5a5a"></div>
<div style="left:10px;top:219.26px;width:2px;height:1px;background:#5a5a5a"></div>
<div style="left:8px;top:221.35px;width:4px;height:1px;background:#5a5a5a"></div>
<div style="left:10px;top:223.44px;width:2px;height:1px;background:#5a5a5a"></div>
<div style="left:10px;top:225.53px;width:2px;height:1px;background:#5a5a5a"></div>
<div style="left:10px;top:227.62px;width:2px;height:1px;background:#5a5a5a"></div>
<div style="left:10px;top:229.71px;width:2px;height:1px;background:#5a5a5a"></div>
<div style="left:1px;top:231.80px;width:11px;height:1px;background:#6e6e6e"></div>
<div class="rl" style="left:2.5px;top:233.80px;width:5px;font-size:5.5px;line-height:6px;color:#a8a8a8;white-space:normal;word-break:break-all">250</div>
<div style="left:10px;top:233.89px;width:2px;height:1px;background:#5a5a5a"></div>
<div style="left:10px;top:235.98px;width:2px;height:1px;background:#5a5a5a"></div>
<div style="left:10px;top:238.07px;width:2px;height:1px;background:#5a5a5a"></div>
<div style="left:10px;top:240.16px;width:2px;height:1px;background:#5a5a5a"></div>
<div style="left:8px;top:242.25px;width:4px;height:1px;background:#5a5a5a"></div>
<div style="left:10px;top:244.34px;width:2px;height:1px;background:#5a5a5a"></div>
<div style="left:10px;top:246.43px;width:2px;height:1px;background:#5a5a5a"></div>
<div style="left:10px;top:248.52px;width:2px;height:1px;background:#5a5a5a"></div>
<div style="left:10px;top:250.61px;width:2px;height:1px;background:#5a5a5a"></div>
<div style="left:1px;top:252.70px;width:11px;height:1px;background:#6e6e6e"></div>
<div class="rl" style="left:2.5px;top:254.70px;width:5px;font-size:5.5px;line-height:6px;color:#a8a8a8;white-space:normal;word-break:break-all">300</div>
<div style="left:10px;top:254.79px;width:2px;height:1px;background:#5a5a5a"></div>
<div style="left:10px;top:256.88px;width:2px;height:1px;background:#5a5a5a"></div>
<div style="left:10px;top:258.97px;width:2px;height:1px;background:#5a5a5a"></div>
<div style="left:10px;top:261.06px;width:2px;height:1px;background:#5a5a5a"></div>
<div style="left:8px;top:263.15px;width:4px;height:1px;background:#5a5a5a"></div>
<div style="left:10px;top:265.24px;width:2px;height:1px;background:#5a5a5a"></div>
<div style="left:10px;top:267.33px;width:2px;height:1px;background:#5a5a5a"></div>
<div style="left:10px;top:269.42px;width:2px;height:1px;background:#5a5a5a"></div>
<div style="left:10px;top:271.51px;width:2px;height:1px;background:#5a5a5a"></div>
<div style="left:1px;top:273.60px;width:11px;height:1px;background:#6e6e6e"></div>
<div class="rl" style="left:2.5px;top:275.60px;width:5px;font-size:5.5px;line-height:6px;color:#a8a8a8;white-space:normal;word-break:break-all">350</div>
<div style="left:10px;top:275.69px;width:2px;height:1px;background:#5a5a5a"></div>
<div style="left:10px;top:277.78px;width:2px;height:1px;background:#5a5a5a"></div>
<div style="left:10px;top:279.87px;width:2px;height:1px;background:#5a5a5a"></div>
<div style="left:10px;top:281.96px;width:2px;height:1px;background:#5a5a5a"></div>
<div style="left:8px;top:284.05px;width:4px;height:1px;background:#5a5a5a"></div>
<div style="left:10px;top:286.14px;width:2px;height:1px;background:#5a5a5a"></div>
<div style="left:10px;top:288.23px;width:2px;height:1px;background:#5a5a5a"></div>
<div style="left:10px;top:290.32px;width:2px;height:1px;background:#5a5a5a"></div>
<div style="left:10px;top:292.41px;width:2px;height:1px;background:#5a5a5a"></div>
<div style="left:1px;top:294.50px;width:11px;height:1px;background:#6e6e6e"></div>
<div class="rl" style="left:2.5px;top:296.50px;width:5px;font-size:5.5px;line-height:6px;color:#a8a8a8;white-space:normal;word-break:break-all">400</div>
<div style="left:10px;top:296.59px;width:2px;height:1px;background:#5a5a5a"></div>
<div style="left:10px;top:298.68px;width:2px;height:1px;background:#5a5a5a"></div>
<div style="left:10px;top:300.77px;width:2px;height:1px;background:#5a5a5a"></div>
<div style="left:10px;top:302.86px;width:2px;height:1px;background:#5a5a5a"></div>
<div style="left:8px;top:304.95px;width:4px;height:1px;background:#5a5a5a"></div>
<div style="left:10px;top:307.04px;width:2px;height:1px;background:#5a5a5a"></div>
<div style="left:10px;top:309.13px;width:2px;height:1px;background:#5a5a5a"></div>
<div style="left:10px;top:311.22px;width:2px;height:1px;background:#5a5a5a"></div>
<div style="left:10px;top:313.31px;width:2px;height:1px;background:#5a5a5a"></div>
<div style="left:1px;top:315.40px;width:11px;height:1px;background:#6e6e6e"></div>
<div class="rl" style="left:2.5px;top:317.40px;width:5px;font-size:5.5px;line-height:6px;color:#a8a8a8;white-space:normal;word-break:break-all">450</div>
<div style="left:10px;top:317.49px;width:2px;height:1px;background:#5a5a5a"></div>
<div style="left:10px;top:319.58px;width:2px;height:1px;background:#5a5a5a"></div>
<div style="left:10px;top:321.67px;width:2px;height:1px;background:#5a5a5a"></div>
<div style="left:10px;top:323.76px;width:2px;height:1px;background:#5a5a5a"></div>
<div style="left:8px;top:325.85px;width:4px;height:1px;background:#5a5a5a"></div>
<div style="left:10px;top:327.94px;width:2px;height:1px;background:#5a5a5a"></div>
<div style="left:10px;top:330.03px;width:2px;height:1px;background:#5a5a5a"></div>
<div style="left:10px;top:332.12px;width:2px;height:1px;background:#5a5a5a"></div>
<div style="left:10px;top:334.21px;width:2px;height:1px;background:#5a5a5a"></div>
<div style="left:1px;top:336.30px;width:11px;height:1px;background:#6e6e6e"></div>
<div class="rl" style="left:2.5px;top:338.30px;width:5px;font-size:5.5px;line-height:6px;color:#a8a8a8;white-space:normal;word-break:break-all">500</div>
<div style="left:10px;top:338.39px;width:2px;height:1px;background:#5a5a5a"></div>
<div style="left:10px;top:340.48px;width:2px;height:1px;background:#5a5a5a"></div>
<div style="left:10px;top:342.57px;width:2px;height:1px;background:#5a5a5a"></div>
<div style="left:10px;top:344.66px;width:2px;height:1px;background:#5a5a5a"></div>
<div style="left:8px;top:346.75px;width:4px;height:1px;background:#5a5a5a"></div>
<div style="left:10px;top:348.84px;width:2px;height:1px;background:#5a5a5a"></div>
<div style="left:10px;top:350.93px;width:2px;height:1px;background:#5a5a5a"></div>
<div style="left:10px;top:353.02px;width:2px;height:1px;background:#5a5a5a"></div>
<div style="left:10px;top:355.11px;width:2px;height:1px;background:#5a5a5a"></div>
<div style="left:1px;top:357.20px;width:11px;height:1px;background:#6e6e6e"></div>
<div class="rl" style="left:2.5px;top:359.20px;width:5px;font-size:5.5px;line-height:6px;color:#a8a8a8;white-space:normal;word-break:break-all">550</div>
<div style="left:10px;top:359.29px;width:2px;height:1px;background:#5a5a5a"></div>
<div style="left:10px;top:361.38px;width:2px;height:1px;background:#5a5a5a"></div>
<div style="left:10px;top:363.47px;width:2px;height:1px;background:#5a5a5a"></div>
<div style="left:10px;top:365.56px;width:2px;height:1px;background:#5a5a5a"></div>
<div style="left:8px;top:367.65px;width:4px;height:1px;background:#5a5a5a"></div>
<div style="left:10px;top:369.74px;width:2px;height:1px;background:#5a5a5a"></div>
<div style="left:10px;top:371.83px;width:2px;height:1px;background:#5a5a5a"></div>
<div style="left:10px;top:373.92px;width:2px;height:1px;background:#5a5a5a"></div>
<div style="left:10px;top:376.01px;width:2px;height:1px;background:#5a5a5a"></div>
<div style="left:1px;top:378.10px;width:11px;height:1px;background:#6e6e6e"></div>
<div class="rl" style="left:2.5px;top:380.10px;width:5px;font-size:5.5px;line-height:6px;color:#a8a8a8;white-space:normal;word-break:break-all">600</div>
<div style="left:10px;top:380.19px;width:2px;height:1px;background:#5a5a5a"></div>
<div style="left:10px;top:382.28px;width:2px;height:1px;background:#5a5a5a"></div>
<div style="left:10px;top:384.37px;width:2px;height:1px;background:#5a5a5a"></div>
<div style="left:10px;top:386.46px;width:2px;height:1px;background:#5a5a5a"></div>
<div style="left:8px;top:388.55px;width:4px;height:1px;background:#5a5a5a"></div>
<div style="left:10px;top:390.64px;width:2px;height:1px;background:#5a5a5a"></div>
<div style="left:10px;top:392.73px;width:2px;height:1px;background:#5a5a5a"></div>
<div style="left:10px;top:394.82px;width:2px;height:1px;background:#5a5a5a"></div>
<div style="left:10px;top:396.91px;width:2px;height:1px;background:#5a5a5a"></div>
<div style="left:1px;top:399.00px;width:11px;height:1px;background:#6e6e6e"></div>
<div class="rl" style="left:2.5px;top:401.00px;width:5px;font-size:5.5px;line-height:6px;color:#a8a8a8;white-space:normal;word-break:break-all">650</div>
<div style="left:10px;top:401.09px;width:2px;height:1px;background:#5a5a5a"></div>
<div style="left:10px;top:403.18px;width:2px;height:1px;background:#5a5a5a"></div>
<div style="left:10px;top:405.27px;width:2px;height:1px;background:#5a5a5a"></div>
<div style="left:10px;top:407.36px;width:2px;height:1px;background:#5a5a5a"></div>
<div style="left:8px;top:409.45px;width:4px;height:1px;background:#5a5a5a"></div>
<div style="left:10px;top:411.54px;width:2px;height:1px;background:#5a5a5a"></div>
<div style="left:10px;top:413.63px;width:2px;height:1px;background:#5a5a5a"></div>
<div style="left:10px;top:415.72px;width:2px;height:1px;background:#5a5a5a"></div>
<div style="left:10px;top:417.81px;width:2px;height:1px;background:#5a5a5a"></div>
<div style="left:1px;top:419.90px;width:11px;height:1px;background:#6e6e6e"></div>
<div class="rl" style="left:2.5px;top:421.90px;width:5px;font-size:5.5px;line-height:6px;color:#a8a8a8;white-space:normal;word-break:break-all">700</div>
<div style="left:10px;top:421.99px;width:2px;height:1px;background:#5a5a5a"></div>
<div style="left:10px;top:424.08px;width:2px;height:1px;background:#5a5a5a"></div>
<div style="left:10px;top:426.17px;width:2px;height:1px;background:#5a5a5a"></div>
<div style="left:10px;top:428.26px;width:2px;height:1px;background:#5a5a5a"></div>
<div style="left:8px;top:430.35px;width:4px;height:1px;background:#5a5a5a"></div>
<div style="left:10px;top:432.44px;width:2px;height:1px;background:#5a5a5a"></div>
<div style="left:10px;top:434.53px;width:2px;height:1px;background:#5a5a5a"></div>
<div style="left:0px;top:50px;width:13px;height:13px;background:#3b3b3b;"></div>
<svg style="left:0px;top:52px;" width="13" height="10" viewBox="0 0 13 10"><path d="M0 0H8.5L12 5L8.5 10H0Z" fill="#4f4f4f"/></svg>
<div style="left:904px;top:50px;width:2px;height:385px;background:#262626;"></div>
<div style="left:906px;top:50px;width:11px;height:385px;background:linear-gradient(to right,#313131,#484848);"></div>
<div style="left:917px;top:39px;width:2px;height:396px;background:#2e2e2e;"></div>
<div style="left:919px;top:39px;width:81px;height:396px;background:#535353;"></div>
<div style="left:919px;top:39px;width:81px;height:8px;background:#3c3c3c;"></div>
<svg style="left:992px;top:40px;" width="6" height="6" viewBox="0 0 6 6"><path d="M0 0.5L2.6 3L0 5.5ZM3.2 0.5L5.8 3L3.2 5.5Z" fill="#dedede"/></svg>
<div style="left:998px;top:39px;width:2px;height:396px;background:#4a4a4a;"></div>
<div style="left:288px;top:122px;width:342px;height:1px;background:#202020;"></div>
<div style="left:288px;top:124px;width:342px;height:1px;background:#202020;"></div>
<div style="left:288px;top:126px;width:338px;height:1px;background:#1b1b1b;"></div>
<div style="left:288px;top:127px;width:4px;height:308px;background:#242424;"></div>
<div style="left:626px;top:126px;width:1px;height:309px;background:#1b1b1b;"></div>
<div style="left:628px;top:122px;width:1px;height:313px;background:#202020;"></div>
<div style="left:630px;top:122px;width:1px;height:313px;background:#202020;"></div>
<div style="left:292px;top:127.3px;width:334px;height:308px;background:#ffffff;"></div>
<div style="left:299.4px;top:146.2px;width:125px;height:125px;border-radius:50%;background:#000"></div>
<div style="left:24px;top:69px;width:24px;height:366px;background:#535353;border-left:1px solid #3d3d3d;border-right:1px solid #404040"></div>
<div style="left:48px;top:69px;width:2px;height:366px;background:#222222;"></div>
<div style="left:50px;top:69px;width:3px;height:366px;background:#2d2d2d;"></div>
<div style="left:24px;top:69px;width:24px;height:10px;background:#383838;border:1px solid #2e2e2e"></div>
<svg style="left:29px;top:72px;" width="17" height="5" viewBox="0 0 17 5"><circle cx="2.3" cy="2.5" r="1.4" fill="#d4d4d4"/><circle cx="5.6" cy="2.5" r="1.4" fill="#d4d4d4"/><rect x="11.5" y="0.5" width="4" height="4" fill="#c4c4c4"/></svg>
<div style="left:31px;top:81px;width:12px;height:1px;background:#3e3e3e;"></div>
<div style="left:27px;top:89px;width:21px;height:14px;background:#3c3c3c;"></div>
<svg style="left:31px;top:89.5px" width="10.5" height="10.5" viewBox="0 0 13 13"><path d="M2 1V10L4.2 7.8L6 11L7 10.5L5.3 7.3H8.5Z" fill="#d6d6d6"/><path d="M8.5 9H13M10.75 6.8V11.2" stroke="#d6d6d6"/></svg>
<svg style="left:43px;top:98px;" width="3" height="3" viewBox="0 0 3 3"><path d="M3 0V3H0Z" fill="#686868"/></svg>
<svg style="left:31px;top:106.5px" width="10.5" height="10.5" viewBox="0 0 13 13"><rect x="2.5" y="2.5" width="8" height="8" stroke="#d6d6d6" stroke-dasharray="1.5 1" fill="none"/></svg>
<svg style="left:43px;top:115px;" width="3" height="3" viewBox="0 0 3 3"><path d="M3 0V3H0Z" fill="#686868"/></svg>
<svg style="left:31px;top:122.5px" width="10.5" height="10.5" viewBox="0 0 13 13"><ellipse cx="6.5" cy="5.5" rx="4.5" ry="3" stroke="#d6d6d6" fill="none" stroke-width="1.2"/><path d="M3 8Q2 11 4 11" stroke="#d6d6d6" fill="none"/></svg>
<svg style="left:43px;top:131px;" width="3" height="3" viewBox="0 0 3 3"><path d="M3 0V3H0Z" fill="#686868"/></svg>
<svg style="left:31px;top:139.5px" width="10.5" height="10.5" viewBox="0 0 13 13"><path d="M10 2L4 8" stroke="#d6d6d6" stroke-width="1.6"/><ellipse cx="3.5" cy="9" rx="2.2" ry="1.5" fill="#d6d6d6"/></svg>
<svg style="left:43px;top:148px;" width="3" height="3" viewBox="0 0 3 3"><path d="M3 0V3H0Z" fill="#686868"/></svg>
<svg style="left:31px;top:155.5px" width="10.5" height="10.5" viewBox="0 0 13 13"><path d="M3.5 1V9.5H12M1 3.5H9.5V12" stroke="#d6d6d6" stroke-width="1.2" fill="none"/></svg>
<svg style="left:43px;top:164px;" width="3" height="3" viewBox="0 0 3 3"><path d="M3 0V3H0Z" fill="#686868"/></svg>
<svg style="left:31px;top:172.5px" width="10.5" height="10.5" viewBox="0 0 13 13"><path d="M9 1.5L11.5 4L8 7.5L5.5 5Z" fill="#d6d6d6"/><path d="M6.5 6.5L2 11" stroke="#d6d6d6" stroke-width="1.4"/></svg>
<svg style="left:43px;top:181px;" width="3" height="3" viewBox="0 0 3 3"><path d="M3 0V3H0Z" fill="#686868"/></svg>
<svg style="left:31px;top:189.5px" width="10.5" height="10.5" viewBox="0 0 13 13"><rect x="3.5" y="0" width="6" height="13" rx="2.5" transform="rotate(45 6.5 6.5)" fill="#d6d6d6"/></svg>
<svg style="left:43px;top:198px;" width="3" height="3" viewBox="0 0 3 3"><path d="M3 0V3H0Z" fill="#686868"/></svg>
<svg style="left:31px;top:205.5px" width="10.5" height="10.5" viewBox="0 0 13 13"><path d="M12 1L6 8" stroke="#d6d6d6" stroke-width="1.8"/><path d="M6 7Q2 8 1 12Q5 12 7 9Z" fill="#d6d6d6"/></svg>
<svg style="left:43px;top:214px;" width="3" height="3" viewBox="0 0 3 3"><path d="M3 0V3H0Z" fill="#686868"/></svg>
<svg style="left:31px;top:222.5px" width="10.5" height="10.5" viewBox="0 0 13 13"><rect x="5.5" y="1" width="2" height="5" fill="#d6d6d6"/><path d="M2 7H11V9H2Z M2 10.5H11V11.5H2Z" fill="#d6d6d6"/></svg>
<svg style="left:43px;top:231px;" width="3" height="3" viewBox="0 0 3 3"><path d="M3 0V3H0Z" fill="#686868"/></svg>
<svg style="left:31px;top:238.5px" width="10.5" height="10.5" viewBox="0 0 13 13"><path d="M11 2L5 8" stroke="#d6d6d6" stroke-width="1.4"/><path d="M5.5 7.5Q2 8 2 11Q5 11.5 6.5 9Z" fill="#d6d6d6"/><path d="M2 2.5A4 4 0 0 1 7 1.5" stroke="#d6d6d6" fill="none"/></svg>
<svg style="left:43px;top:247px;" width="3" height="3" viewBox="0 0 3 3"><path d="M3 0V3H0Z" fill="#686868"/></svg>
<svg style="left:31px;top:255.5px" width="10.5" height="10.5" viewBox="0 0 13 13"><path d="M7 2L11.5 6.5L7 11H3.5L1.5 9Z" fill="#d6d6d6"/><path d="M4 6L7 9" stroke="#535353"/></svg>
<svg style="left:43px;top:264px;" width="3" height="3" viewBox="0 0 3 3"><path d="M3 0V3H0Z" fill="#686868"/></svg>
<svg style="left:31px;top:271.5px" width="10.5" height="10.5" viewBox="0 0 13 13"><defs><linearGradient id="g1"><stop offset="0" stop-color="#eee"/><stop offset="1" stop-color="#555"/></linearGradient></defs><rect x="1.5" y="2.5" width="10" height="8" fill="url(#g1)" stroke="#d6d6d6"/></svg>
<svg style="left:43px;top:280px;" width="3" height="3" viewBox="0 0 3 3"><path d="M3 0V3H0Z" fill="#686868"/></svg>
<svg style="left:31px;top:288.5px" width="10.5" height="10.5" viewBox="0 0 13 13"><path d="M6.5 1Q11 6 10 8.5A3.5 3.5 0 0 1 3 8.5Q2 6 6.5 1Z" fill="#d6d6d6"/></svg>
<svg style="left:43px;top:297px;" width="3" height="3" viewBox="0 0 3 3"><path d="M3 0V3H0Z" fill="#686868"/></svg>
<svg style="left:31px;top:304.5px" width="10.5" height="10.5" viewBox="0 0 13 13"><circle cx="5.5" cy="5" r="3.5" fill="#d6d6d6"/><path d="M7.5 7.5L11 11" stroke="#d6d6d6" stroke-width="1.6"/></svg>
<svg style="left:43px;top:313px;" width="3" height="3" viewBox="0 0 3 3"><path d="M3 0V3H0Z" fill="#686868"/></svg>
<svg style="left:31px;top:321.5px" width="10.5" height="10.5" viewBox="0 0 13 13"><path d="M9 1L12 4L6 11L2 12L3 8Z" fill="#d6d6d6"/><circle cx="6" cy="7" r="1" fill="#535353"/></svg>
<svg style="left:43px;top:330px;" width="3" height="3" viewBox="0 0 3 3"><path d="M3 0V3H0Z" fill="#686868"/></svg>
<svg style="left:31px;top:337.5px" width="10.5" height="10.5" viewBox="0 0 13 13"><path d="M2 2H11V4H7.5V11.5H5.5V4H2Z" fill="#d6d6d6"/></svg>
<svg style="left:31px;top:354.5px" width="10.5" height="10.5" viewBox="0 0 13 13"><path d="M3 1V11L5.5 8.5L7.5 12L8.5 11.5L6.5 8H10Z" fill="#d6d6d6"/></svg>
<svg style="left:43px;top:363px;" width="3" height="3" viewBox="0 0 3 3"><path d="M3 0V3H0Z" fill="#686868"/></svg>
<svg style="left:31px;top:371.5px" width="10.5" height="10.5" viewBox="0 0 13 13"><ellipse cx="6.5" cy="6.5" rx="5" ry="3.5" fill="#d6d6d6"/></svg>
<svg style="left:43px;top:380px;" width="3" height="3" viewBox="0 0 3 3"><path d="M3 0V3H0Z" fill="#686868"/></svg>
<svg style="left:31px;top:387.5px" width="10.5" height="10.5" viewBox="0 0 13 13"><path d="M3 6V3.5M5 6V2M7 6V2M9 6.5V3M3 6Q2 9 5 11.5H9Q11 9 11 6L10.5 5" stroke="#d6d6d6" stroke-width="1.2" fill="none"/><path d="M3.5 6.5H10V10H4.5Z" fill="#d6d6d6"/></svg>
<svg style="left:43px;top:396px;" width="3" height="3" viewBox="0 0 3 3"><path d="M3 0V3H0Z" fill="#686868"/></svg>
<svg style="left:31px;top:404.5px" width="10.5" height="10.5" viewBox="0 0 13 13"><circle cx="5" cy="5" r="3.5" stroke="#d6d6d6" stroke-width="1.4" fill="none"/><path d="M7.5 7.5L11.5 11.5" stroke="#d6d6d6" stroke-width="2"/></svg>
<svg style="left:43px;top:413px;" width="3" height="3" viewBox="0 0 3 3"><path d="M3 0V3H0Z" fill="#686868"/></svg>
<svg style="left:25px;top:420.5px;" width="8" height="8" viewBox="0 0 8 8"><rect x="3" y="3" width="4.5" height="4.5" fill="#fff" stroke="#222"/><rect x="0.5" y="0.5" width="4.5" height="4.5" fill="#000" stroke="#ddd"/></svg>
<svg style="left:37.5px;top:419.5px;" width="9" height="9" viewBox="0 0 9 9"><path d="M2 7V3.5Q2 2 4 2H7M6 0.5L7.5 2L6 3.5M0.5 6L2 7.5L3.5 6" stroke="#ccc" fill="none"/></svg>
<div style="left:27.5px;top:431px;width:11.5px;height:6px;background:#ffffff;"></div>
<div style="left:952px;top:50px;width:13px;height:1px;background:#3f3f3f;"></div>
<div style="left:952px;top:51px;width:13px;height:1px;background:#5e5e5e;"></div>
<svg style="left:924px;top:55px;" width="13" height="13" viewBox="0 0 13 13"><path d="M6.5 1L12 4.5L6.5 8L1 4.5Z" fill="#dcdcdc"/><path d="M1.5 7.5L6.5 10.5L11.5 7.5L12.5 8.5L6.5 12.5L0.5 8.5Z" fill="#d0d0d0"/></svg>
<div class="t" style="left:943px;top:56px;font-size:7px;color:#f2f2f2;-webkit-text-stroke:0.3px #f2f2f2">图层</div>
<div style="left:919px;top:72px;width:78px;height:1px;background:#3c3c3c;"></div>
<div style="left:952px;top:76px;width:13px;height:1px;background:#3f3f3f;"></div>
<div style="left:952px;top:77px;width:13px;height:1px;background:#5e5e5e;"></div>
<svg style="left:925px;top:80px;" width="14" height="14" viewBox="0 0 14 14"><rect x="1.5" y="1.5" width="3" height="11" stroke="#ccc" fill="none"/><path d="M8 13V4Q8 1.5 10.5 1.5Q12.5 1.5 12 4L10 5" stroke="#ccc" stroke-width="1.3" fill="none"/></svg>
<div class="t" style="left:943px;top:82px;font-size:7px;color:#f2f2f2;-webkit-text-stroke:0.3px #f2f2f2">历史记录</div>
<svg style="left:924px;top:98px;" width="15" height="12" viewBox="0 0 15 12"><ellipse cx="7.5" cy="6" rx="7" ry="5" fill="#cfcfcf"/><circle cx="4.5" cy="4.5" r="1.3" fill="#535353"/><circle cx="8" cy="3.5" r="1.3" fill="#535353"/><circle cx="11" cy="5.5" r="1.3" fill="#535353"/><circle cx="6" cy="8" r="1.3" fill="#535353"/></svg>
<div class="t" style="left:943px;top:99px;font-size:7px;color:#f2f2f2;-webkit-text-stroke:0.3px #f2f2f2">颜色</div>
<div style="left:919px;top:114px;width:78px;height:1px;background:#3c3c3c;"></div>
<div style="left:952px;top:118px;width:13px;height:1px;background:#3f3f3f;"></div>
<div style="left:952px;top:119px;width:13px;height:1px;background:#5e5e5e;"></div>
<div style="left:920px;top:122px;width:77px;height:16px;background:#3e3e3e;border:1px solid #333"></div>
<svg style="left:925px;top:123px;" width="13" height="14" viewBox="0 0 13 14"><circle cx="4" cy="5" r="3" fill="#d8d8d8"/><circle cx="4" cy="5" r="1.2" fill="#555"/><rect x="8.5" y="2.5" width="3" height="2.5" fill="#ddd"/><rect x="8.5" y="6" width="3" height="2.5" fill="#ddd"/><rect x="1" y="10.5" width="11" height="2" fill="#e0e0e0"/></svg>
<div class="t" style="left:943px;top:125px;font-size:8px;color:#eaeaea">属性</div>
<div style="left:919px;top:140px;width:78px;height:1px;background:#3c3c3c;"></div>
<div style="left:952px;top:143px;width:13px;height:1px;background:#3f3f3f;"></div>
<div style="left:952px;top:144px;width:13px;height:1px;background:#5e5e5e;"></div>
<svg style="left:926px;top:151px;" width="11" height="11" viewBox="0 0 11 11"><path d="M0.8 10L4 1H5L8.2 10M2.2 6.8H6.8" stroke="#d8d8d8" stroke-width="1.3" fill="none"/><path d="M10.5 1V10.5" stroke="#cfcfcf"/></svg>
<div class="t" style="left:943px;top:151px;font-size:7px;color:#f2f2f2;-webkit-text-stroke:0.3px #f2f2f2">字符</div>
<div style="left:919px;top:166px;width:78px;height:1px;background:#3c3c3c;"></div>
<div style="left:952px;top:169px;width:13px;height:1px;background:#3f3f3f;"></div>
<div style="left:952px;top:170px;width:13px;height:1px;background:#5e5e5e;"></div>
<svg style="left:925px;top:176px;" width="13" height="12" viewBox="0 0 13 12"><path d="M5 8L8 1H9L12 8M6.2 5.5H10.8" stroke="#d8d8d8" stroke-width="1.2" fill="none"/><circle cx="3" cy="9" r="2.2" fill="#cfcfcf"/></svg>
<div class="t" style="left:943px;top:177px;font-size:7px;color:#f2f2f2;-webkit-text-stroke:0.3px #f2f2f2">字符样式</div>
<div style="left:919px;top:192px;width:78px;height:1px;background:#3c3c3c;"></div>
<div style="left:952px;top:195px;width:13px;height:1px;background:#3f3f3f;"></div>
<div style="left:952px;top:196px;width:13px;height:1px;background:#5e5e5e;"></div>
<svg style="left:924px;top:199px;" width="14" height="17" viewBox="0 0 14 17"><ellipse cx="3.5" cy="4" rx="2" ry="3" transform="rotate(-25 3.5 4)" fill="#d4d4d4"/><ellipse cx="7" cy="3" rx="1.6" ry="2.8" fill="#dcdcdc"/><ellipse cx="10.5" cy="4" rx="2" ry="3" transform="rotate(25 10.5 4)" fill="#d4d4d4"/><rect x="5" y="7" width="4" height="9" fill="#dedede"/></svg>
<div class="t" style="left:943px;top:202px;font-size:7px;color:#f2f2f2;-webkit-text-stroke:0.3px #f2f2f2">画笔</div>
<svg style="left:924px;top:219px;" width="14" height="12" viewBox="0 0 14 12"><path d="M3 2.5H13" stroke="#cfcfcf" stroke-width="1.6"/><ellipse cx="3" cy="2.5" rx="2.5" ry="2" fill="#e0e0e0"/><path d="M1 8.5H11" stroke="#cfcfcf" stroke-width="1.6"/><ellipse cx="11" cy="8.5" rx="2.5" ry="2" fill="#e0e0e0"/></svg>
<div class="t" style="left:943px;top:220px;font-size:7px;color:#f2f2f2;-webkit-text-stroke:0.3px #f2f2f2">画笔预设</div>
<div style="left:919px;top:233px;width:78px;height:1px;background:#3c3c3c;"></div>
<div style="left:740px;top:114px;width:177px;height:229px;background:#535353;border:1px solid #393939"></div>
<div style="left:740px;top:114px;width:177px;height:13px;background:#3b3b3b;"></div>
<div style="left:741px;top:115px;width:21px;height:12px;background:#535353;"></div>
<div class="t" style="left:745px;top:117px;font-size:7.5px;color:#f0f0f0;-webkit-text-stroke:0.2px #f0f0f0">属性</div>
<svg style="left:891px;top:118px;" width="8" height="6" viewBox="0 0 8 6"><path d="M0 0.5L3 3L0 5.5ZM4 0.5L7 3L4 5.5Z" fill="#d8d8d8"/></svg>
<div style="left:903px;top:114px;width:13px;height:12px;background:#353535;"></div>
<svg style="left:904px;top:116px;" width="12" height="9" viewBox="0 0 12 9"><path d="M1 4.5H5" stroke="#ddd"/><path d="M7 2.5H10M7 4.5H10M7 6.5H10" stroke="#ccc"/></svg>
<div style="left:746px;top:130px;width:15px;height:14px;background:#3c3c3c;border:1px solid #333"></div>
<svg style="left:748px;top:132px;" width="11" height="10" viewBox="0 0 11 10"><rect x="1.5" y="1.5" width="8" height="7" stroke="#cfcfcf" fill="none"/><rect x="0.5" y="0.5" width="2" height="2" fill="#ccc"/><rect x="8.5" y="0.5" width="2" height="2" fill="#ccc"/><rect x="0.5" y="7.5" width="2" height="2" fill="#ccc"/><rect x="8.5" y="7.5" width="2" height="2" fill="#ccc"/></svg>
<svg style="left:763px;top:132px;" width="13" height="12" viewBox="0 0 13 12"><rect x="0.5" y="0.5" width="12" height="11" fill="#e0e0e0"/><circle cx="6.5" cy="6" r="2.8" fill="#333"/></svg>
<div class="t" style="left:777px;top:133px;font-size:7.5px;color:#f2f2f2;-webkit-text-stroke:0.3px #f2f2f2">实时形状属性</div>
<div style="left:741px;top:147px;width:175px;height:1px;background:#474747;"></div>
<div class="t" style="left:745px;top:155px;font-size:8px;color:#e8e8e8">W:</div>
<div style="left:759px;top:154px;width:34px;height:12px;background:#3a3a3a;border:1px solid #333"></div>
<div class="t" style="left:761px;top:155px;font-size:7.5px;color:#f4f4f4;-webkit-text-stroke:0.2px #f4f4f4">300 像素</div>
<svg style="left:799px;top:156px;" width="11" height="7" viewBox="0 0 11 7"><ellipse cx="3" cy="3.5" rx="2.3" ry="2" stroke="#ccc" fill="none"/><ellipse cx="8" cy="3.5" rx="2.3" ry="2" stroke="#ccc" fill="none"/></svg>
<div class="t" style="left:815px;top:155px;font-size:8px;color:#e8e8e8">H:</div>
<div style="left:826px;top:154px;width:36px;height:12px;background:#3a3a3a;border:1px solid #333"></div>
<div class="t" style="left:828px;top:155px;font-size:7.5px;color:#f4f4f4;-webkit-text-stroke:0.2px #f4f4f4">300 像素</div>
<div class="t" style="left:745px;top:173px;font-size:8px;color:#e8e8e8">X:</div>
<div style="left:759px;top:171px;width:34px;height:12px;background:#3a3a3a;border:1px solid #333"></div>
<div class="t" style="left:761px;top:172px;font-size:7.5px;color:#f4f4f4;-webkit-text-stroke:0.2px #f4f4f4">18 像素</div>
<div class="t" style="left:815px;top:173px;font-size:8px;color:#e8e8e8">Y:</div>
<div style="left:826px;top:171px;width:36px;height:12px;background:#3a3a3a;border:1px solid #333"></div>
<div class="t" style="left:828px;top:172px;font-size:7.5px;color:#f4f4f4;-webkit-text-stroke:0.2px #f4f4f4">45 像素</div>
<div style="left:741px;top:187px;width:165px;height:1px;background:#474747;"></div>
<div style="left:745px;top:191px;width:17px;height:12px;background:#000;border:1px solid #888"></div>
<svg style="left:757px;top:198px;" width="4" height="4" viewBox="0 0 4 4"><path d="M4 0V4H0Z" fill="#ddd"/></svg>
<svg style="left:767px;top:191px;" width="17" height="12" viewBox="0 0 17 12"><rect x="0.5" y="0.5" width="16" height="11" fill="#f4f4f4" stroke="#888"/><path d="M2 10L15 2" stroke="#e03030" stroke-width="1.2"/><rect x="4" y="4" width="8" height="3" fill="#333"/><path d="M16 8V12H12Z" fill="#444"/></svg>
<div style="left:787px;top:191px;width:38px;height:12px;background:#363636;border:1px solid #2f2f2f"></div>
<div class="t" style="left:790px;top:192px;font-size:8px;color:#f4f4f4;-webkit-text-stroke:0.25px #f4f4f4">7.84 点</div>
<div style="left:827px;top:191px;width:11px;height:12px;background:#666;border:1px solid #4a4a4a"></div>
<svg style="left:830px;top:195px;" width="5" height="4" viewBox="0 0 5 4"><path d="M0 0H5L2.5 3.5Z" fill="#ccc"/></svg>
<div style="left:843px;top:191px;width:19px;height:12px;background:#5e5e5e;border:1px solid #444"></div>
<svg style="left:845px;top:195px;" width="15" height="4" viewBox="0 0 15 4"><path d="M1 2H12" stroke="#ddd" stroke-width="1.5"/><path d="M12 0.5L14.5 2L12 3.5Z" fill="#ccc"/></svg>
<div style="left:745px;top:207px;width:38px;height:12px;background:#5e5e5e;border:1px solid #444"></div>
<svg style="left:775px;top:209px;" width="5" height="8" viewBox="0 0 5 8"><path d="M0.5 3.5L2.5 0.5L4.5 3.5Z M0.5 4.5L2.5 7.5L4.5 4.5Z" fill="#ccc"/></svg>
<div style="left:788px;top:207px;width:39px;height:12px;background:#5e5e5e;border:1px solid #444"></div>
<svg style="left:819px;top:209px;" width="5" height="8" viewBox="0 0 5 8"><path d="M0.5 3.5L2.5 0.5L4.5 3.5Z M0.5 4.5L2.5 7.5L4.5 4.5Z" fill="#ccc"/></svg>
<div style="left:832px;top:207px;width:30px;height:12px;background:#5e5e5e;border:1px solid #444"></div>
<svg style="left:854px;top:209px;" width="5" height="8" viewBox="0 0 5 8"><path d="M0.5 3.5L2.5 0.5L4.5 3.5Z M0.5 4.5L2.5 7.5L4.5 4.5Z" fill="#ccc"/></svg>
<svg style="left:748px;top:209px;" width="9" height="8" viewBox="0 0 9 8"><circle cx="4.5" cy="4" r="3" stroke="#ddd" stroke-width="1.2" fill="none"/><rect x="0" y="3" width="2" height="2" fill="#ddd"/></svg>
<svg style="left:792px;top:208px;" width="10" height="10" viewBox="0 0 10 10"><rect x="2" y="1" width="6" height="3" fill="#ddd"/><rect x="1" y="5" width="8" height="4" fill="#ddd"/></svg>
<svg style="left:835px;top:208px;" width="10" height="10" viewBox="0 0 10 10"><rect x="1.5" y="1.5" width="7" height="7" stroke="#ddd" fill="none"/><rect x="3" y="3" width="4" height="6" fill="#ddd"/></svg>
<div style="left:741px;top:223px;width:165px;height:1px;background:#474747;"></div>
<div style="left:762px;top:228px;width:20px;height:13px;background:#3b3b3b;border:1px solid #303030"></div>
<div style="left:783px;top:228px;width:20px;height:13px;background:#656565;border:1px solid #4a4a4a"></div>
<div style="left:803px;top:228px;width:20px;height:13px;background:#656565;border:1px solid #4a4a4a"></div>
<div style="left:824px;top:228px;width:20px;height:13px;background:#656565;border:1px solid #4a4a4a"></div>
<svg style="left:767px;top:230px;" width="10" height="9" viewBox="0 0 10 9"><rect x="0.5" y="0.5" width="6" height="5" stroke="#d4d4d4" fill="none"/><rect x="3.5" y="3.5" width="6" height="5" fill="#bdbdbd" stroke="#d4d4d4"/></svg>
<svg style="left:788px;top:230px;" width="10" height="9" viewBox="0 0 10 9"><rect x="0.5" y="0.5" width="6" height="5" stroke="#d4d4d4" fill="none"/><rect x="3.5" y="3.5" width="6" height="5" fill="#bdbdbd" stroke="#d4d4d4"/></svg>
<svg style="left:808px;top:230px;" width="10" height="9" viewBox="0 0 10 9"><rect x="0.5" y="0.5" width="6" height="5" stroke="#d4d4d4" fill="none"/><rect x="3.5" y="3.5" width="6" height="5" fill="#bdbdbd" stroke="#d4d4d4"/></svg>
<svg style="left:829px;top:230px;" width="10" height="9" viewBox="0 0 10 9"><rect x="0.5" y="0.5" width="6" height="5" stroke="#d4d4d4" fill="none"/><rect x="3.5" y="3.5" width="6" height="5" fill="#bdbdbd" stroke="#d4d4d4"/></svg>
<div style="left:908px;top:147px;width:6px;height:179px;background:#444444;"></div>
<div style="left:909px;top:148px;width:4px;height:177px;background:#3a3a3a;"></div>
<div style="left:741px;top:337px;width:175px;height:5px;background:#4a4a4a;"></div>
<div style="left:741px;top:336px;width:175px;height:1px;background:#464646;"></div>
<div style="left:818px;top:339px;width:20px;height:1px;background:#3e3e3e;"></div>
<div style="left:789px;top:282px;width:67px;height:24px;border-radius:12px;background:linear-gradient(#fbfbfb,#e6e6e6);box-shadow:0 1px 2px rgba(0,0,0,.55)"></div>
<div style="left:776px;top:278.5px;width:29.5px;height:29.5px;border-radius:50%;background:linear-gradient(#ec3a2e,#d11d16);border:2px solid #f2d6d4;box-shadow:0 1px 3px rgba(0,0,0,.6)"></div>
<div style="left:778px;top:288px;width:26px;text-align:center;font-size:8.5px;line-height:10px;color:#fff;white-space:nowrap;font-weight:bold;will-change:transform">94%</div>
<svg style="left:808.5px;top:287px;" width="4" height="7" viewBox="0 0 4 7"><path d="M2 6.5V1.5M0.5 3L2 1L3.5 3" stroke="#c0703c" stroke-width="1.1" fill="none"/></svg>
<svg style="left:808.5px;top:296px;" width="4" height="7" viewBox="0 0 4 7"><path d="M2 0.5V5.5M0.5 4L2 6L3.5 4" stroke="#3e9a5a" stroke-width="1.1" fill="none"/></svg>
<div style="left:815px;top:286.5px;width:22.5px;text-align:right;font-size:6.5px;line-height:7px;color:#222;white-space:nowrap;will-change:transform">0K/s</div>
<div style="left:811px;top:295.5px;width:26.5px;text-align:right;font-size:6.5px;line-height:7px;color:#222;white-space:nowrap;will-change:transform">0.1K/s</div>
<div style="left:840.5px;top:288.5px;width:10.5px;height:10.5px;border-radius:50%;background:radial-gradient(circle at 50% 35%,#5c9ce8,#2456b0)"></div>
<div style="left:841px;top:289px;width:10px;text-align:center;font-size:8px;line-height:9px;color:#fff;font-weight:bold">+</div>
<div style="left:847.5px;top:287px;width:4.5px;height:4.5px;border-radius:50%;background:#e03a2a"></div>
</body></html>
